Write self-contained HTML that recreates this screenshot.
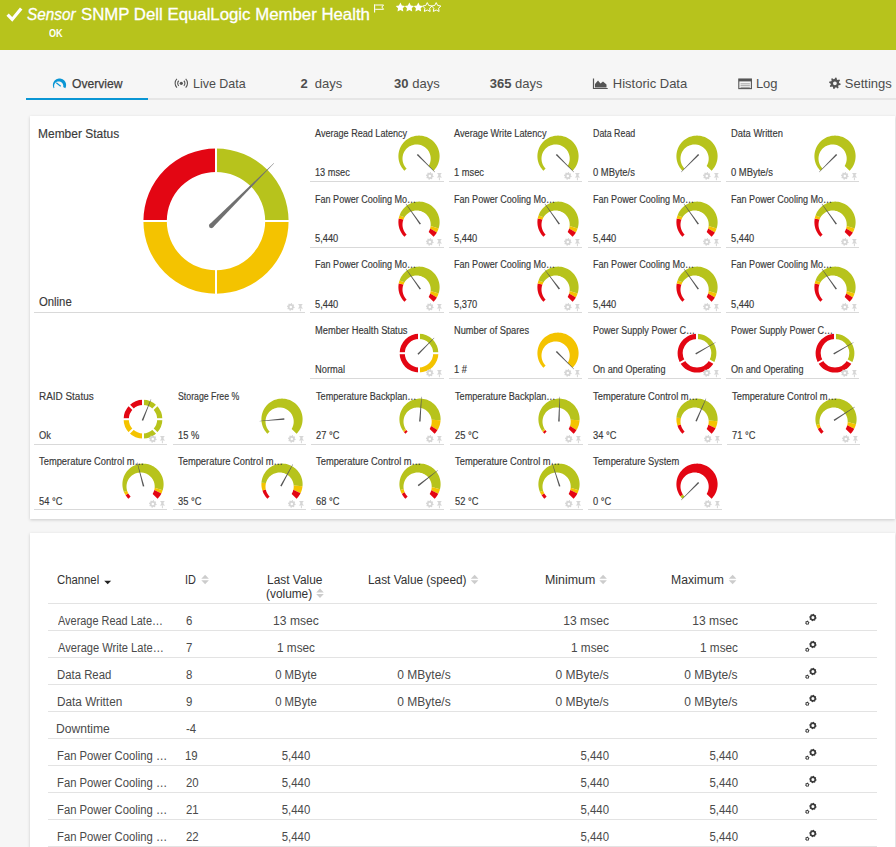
<!DOCTYPE html>
<html><head><meta charset="utf-8"><title>PRTG Sensor</title>
<style>
html,body{margin:0;padding:0}
body{width:896px;height:847px;overflow:hidden;position:relative;background:#f6f6f6;font-family:"Liberation Sans",sans-serif}
.t{position:absolute;white-space:nowrap}
svg{overflow:visible}
</style></head><body>
<div style="position:absolute;left:0;top:0;width:896px;height:50px;background:#b7c31c"></div><svg style="position:absolute;left:0;top:0" width="60" height="50"><path d="M7.6,14.6 L12.2,19.4 L21.2,8.6" fill="none" stroke="#fff" stroke-width="3.2" stroke-linecap="butt" stroke-linejoin="miter"/></svg><div class="t hd1" style="left:27.14px;top:6.94px;font-size:15.9px;line-height:15.9px;color:#fff;font-style:italic;-webkit-text-stroke:0.3px #fff;transform:scaleX(0.9640);transform-origin:0 0;">Sensor</div><div class="t hd2" style="left:80.64px;top:6.94px;font-size:15.9px;line-height:15.9px;color:#fff;-webkit-text-stroke:0.3px #fff;transform:scaleX(1.0563);transform-origin:0 0;">SNMP Dell EqualLogic Member Health</div><div class="t hok" style="left:48.9px;top:29.37px;font-size:10.2px;line-height:10.2px;color:#fff;font-weight:bold;transform:scaleX(0.8933);transform-origin:0 0;">OK</div><svg style="position:absolute;left:0;top:0" width="896" height="50"><path d="M374.6,4.3 L374.6,12.6" stroke="#fff" stroke-width="1.1"/><path d="M375.2,5 L383.6,5 L381.8,7 L383.6,9.3 L375.2,9.3" fill="none" stroke="#fff" stroke-width="1"/><path d="M400.4,2.6 L401.87,5.48 L405.06,5.99 L402.78,8.27 L403.28,11.46 L400.4,10 L397.52,11.46 L398.02,8.27 L395.74,5.99 L398.93,5.48Z" fill="#fff"/><path d="M409.35,2.6 L410.82,5.48 L414.01,5.99 L411.73,8.27 L412.23,11.46 L409.35,10 L406.47,11.46 L406.97,8.27 L404.69,5.99 L407.88,5.48Z" fill="#fff"/><path d="M418.3,2.6 L419.77,5.48 L422.96,5.99 L420.68,8.27 L421.18,11.46 L418.3,10 L415.42,11.46 L415.92,8.27 L413.64,5.99 L416.83,5.48Z" fill="#fff"/><path d="M427.25,2.6 L428.72,5.48 L431.91,5.99 L429.63,8.27 L430.13,11.46 L427.25,10 L424.37,11.46 L424.87,8.27 L422.59,5.99 L425.78,5.48Z" fill="none" stroke="#fff" stroke-width="1"/><path d="M436.2,2.6 L437.67,5.48 L440.86,5.99 L438.58,8.27 L439.08,11.46 L436.2,10 L433.32,11.46 L433.82,8.27 L431.54,5.99 L434.73,5.48Z" fill="none" stroke="#fff" stroke-width="1"/></svg>
<div style="position:absolute;left:26px;top:98px;width:870px;height:2px;background:#e6e6e6"></div><div style="position:absolute;left:26px;top:98px;width:122px;height:2px;background:#0a96d4"></div><div class="t tab1" style="left:71.9px;top:77.1px;font-size:13px;line-height:13px;color:#3d3d3d;-webkit-text-stroke:0.25px #3d3d3d;transform:scaleX(0.9309);transform-origin:0 0;">Overview</div><div class="t tab" style="left:192.64px;top:77px;font-size:13px;line-height:13px;color:#4d4d4d;transform:scaleX(0.9593);transform-origin:0 0;">Live Data</div><div class="t tab" style="left:300.4px;top:77px;font-size:13px;line-height:13px;color:#4d4d4d;"><b>2</b>&nbsp;&nbsp;days</div><div class="t tab" style="left:394.1px;top:77px;font-size:13px;line-height:13px;color:#4d4d4d;"><b>30</b> days</div><div class="t tab" style="left:489.8px;top:77px;font-size:13px;line-height:13px;color:#4d4d4d;"><b>365</b> days</div><div class="t tab" style="left:612.8px;top:77px;font-size:13px;line-height:13px;color:#4d4d4d;">Historic Data</div><div class="t tab" style="left:755.9px;top:77px;font-size:13px;line-height:13px;color:#4d4d4d;">Log</div><div class="t tab" style="left:844.8px;top:77px;font-size:13px;line-height:13px;color:#4d4d4d;">Settings</div><svg style="position:absolute;left:0;top:0" width="896" height="110"><path d="M53.67,88.2 L53.47,87.79 L53.3,87.37 L53.16,86.94 L53.05,86.5 L52.97,86.06 L52.92,85.61 L52.9,85.15 L52.91,84.7 L52.95,84.25 L53.03,83.8 L53.13,83.36 L53.27,82.93 L53.43,82.51 L53.62,82.1 L53.84,81.7 L54.09,81.32 L54.36,80.96 L54.66,80.62 L54.98,80.29 L55.32,80 L55.68,79.72 L56.05,79.47 L56.45,79.25 L56.86,79.05 L57.28,78.89 L57.71,78.75 L58.15,78.64 L58.6,78.56 L59.05,78.52 L59.5,78.5 L59.95,78.52 L60.4,78.56 L60.85,78.64 L61.29,78.75 L61.72,78.89 L62.14,79.05 L62.55,79.25 L62.95,79.47 L63.32,79.72 L63.68,80 L64.02,80.29 L64.34,80.62 L64.64,80.96 L64.91,81.32 L65.16,81.7 L65.38,82.1 L65.57,82.51 L65.73,82.93 L65.87,83.36 L65.97,83.8 L66.05,84.25 L66.09,84.7 L66.1,85.15 L66.08,85.61 L66.03,86.06 L65.95,86.5 L65.84,86.94 L65.7,87.37 L65.53,87.79 L65.33,88.2 L63.18,87.06 L63.24,86.77 L63.27,86.48 L63.3,86.2 L63.3,85.93 L63.29,85.65 L63.26,85.39 L63.22,85.13 L63.16,84.88 L63.09,84.63 L63.01,84.4 L62.92,84.17 L62.82,83.95 L62.7,83.73 L62.58,83.53 L62.45,83.33 L62.3,83.14 L62.15,82.96 L61.99,82.79 L61.83,82.63 L61.65,82.47 L61.47,82.33 L61.28,82.19 L61.08,82.06 L60.88,81.95 L60.66,81.84 L60.45,81.74 L60.22,81.66 L59.99,81.58 L59.75,81.52 L59.5,81.47 L59.25,81.43 L58.99,81.41 L58.73,81.4 L58.46,81.41 L58.19,81.43 L57.91,81.47 L57.64,81.52 L57.36,81.6 L57.08,81.69 L56.8,81.81 L56.53,81.94 L56.26,82.1 L56,82.28 L55.74,82.48 L55.5,82.7 L55.27,82.94 L55.05,83.2 L54.85,83.48 L54.67,83.78 L54.51,84.1 L54.37,84.43 L54.26,84.78 L54.18,85.14 L54.13,85.51 L54.1,85.89 L54.11,86.27 L54.15,86.66 L54.22,87.04 L54.32,87.41 L54.46,87.78Z" fill="#0a96d4"/><line x1="56.3" y1="82.7" x2="60.7" y2="86.3" stroke="#0a96d4" stroke-width="1.1"/><circle cx="181.3" cy="83.3" r="1.6" fill="#555"/><path d="M183.85,80.75 A3.6,3.6 0 0 1 183.85,85.85" fill="none" stroke="#555" stroke-width="1.1"/><path d="M178.75,85.85 A3.6,3.6 0 0 1 178.75,80.75" fill="none" stroke="#555" stroke-width="1.1"/><path d="M185.68,78.92 A6.2,6.2 0 0 1 185.68,87.68" fill="none" stroke="#555" stroke-width="1.1"/><path d="M176.92,87.68 A6.2,6.2 0 0 1 176.92,78.92" fill="none" stroke="#555" stroke-width="1.1"/><path d="M593.5,78.5 L593.5,88.5 L607.7,88.5" fill="none" stroke="#555" stroke-width="1.2"/><path d="M595,87.6 L595,84 L598,80.5 L600.5,83.5 L603,81.5 L606.5,84.5 L606.5,87.6Z" fill="#555"/><rect x="738.8" y="79" width="12.6" height="9.6" fill="none" stroke="#555" stroke-width="1.1"/><rect x="738.8" y="79" width="12.6" height="2.4" fill="#555"/><rect x="740.5" y="83.4" width="9.4" height="0.9" fill="#999"/><rect x="740.5" y="85.3" width="9.4" height="0.9" fill="#999"/><rect x="740.5" y="87.1" width="9.4" height="0.9" fill="#999"/><path d="M835.47,77.53 L836.58,77.75 L836.88,79.6 L837.56,80.05 L839.38,79.62 L840.02,80.57 L838.92,82.08 L839.08,82.89 L840.67,83.87 L840.45,84.98 L838.6,85.28 L838.15,85.96 L838.58,87.78 L837.63,88.42 L836.12,87.32 L835.31,87.48 L834.33,89.07 L833.22,88.85 L832.92,87 L832.24,86.55 L830.42,86.98 L829.78,86.03 L830.88,84.52 L830.72,83.71 L829.13,82.73 L829.35,81.62 L831.2,81.32 L831.65,80.64 L831.22,78.82 L832.17,78.18 L833.68,79.28 L834.49,79.12Z M836.8,83.3 A1.9,1.9 0 1 0 833,83.3 A1.9,1.9 0 1 0 836.8,83.3Z" fill="#555" fill-rule="evenodd"/></svg>
<div style="position:absolute;left:30px;top:116px;width:865px;height:403px;background:#fff;box-shadow:0 1px 3px rgba(0,0,0,0.18)"></div><div style="position:absolute;left:30px;top:533px;width:865px;height:330px;background:#fff;box-shadow:0 1px 3px rgba(0,0,0,0.18)"></div>
<svg style="position:absolute;left:0;top:0" width="896" height="847"><rect x="310" y="181" width="134" height="1" fill="#d9d9d9"/><path d="M404.43,170.77 L403.46,169.72 L402.56,168.61 L401.74,167.45 L401,166.22 L400.35,164.95 L399.79,163.64 L399.32,162.29 L398.95,160.92 L398.67,159.52 L398.49,158.1 L398.41,156.68 L398.42,155.25 L398.54,153.83 L398.75,152.41 L399.06,151.02 L399.47,149.65 L399.97,148.32 L400.56,147.02 L401.24,145.76 L402.01,144.56 L402.85,143.41 L403.78,142.32 L404.77,141.3 L405.84,140.35 L406.97,139.48 L408.16,138.69 L409.39,137.98 L410.68,137.36 L412,136.82 L413.36,136.39 L414.75,136.04 L416.15,135.8 L417.57,135.65 L419,135.6 L420.43,135.65 L421.85,135.8 L423.25,136.04 L424.64,136.39 L426,136.82 L427.32,137.36 L428.61,137.98 L429.84,138.69 L431.03,139.48 L432.16,140.35 L433.23,141.3 L434.22,142.32 L435.15,143.41 L435.99,144.56 L436.76,145.76 L437.44,147.02 L438.03,148.32 L438.53,149.65 L438.94,151.02 L439.25,152.41 L439.46,153.83 L439.58,155.25 L439.59,156.68 L439.51,158.1 L439.33,159.52 L439.05,160.92 L438.68,162.29 L438.21,163.64 L437.65,164.95 L437,166.22 L436.26,167.45 L435.44,168.61 L434.54,169.72 L433.57,170.77 L428.68,165.88 L429.15,165.03 L429.55,164.17 L429.89,163.3 L430.17,162.42 L430.39,161.55 L430.55,160.67 L430.65,159.81 L430.7,158.95 L430.69,158.11 L430.64,157.28 L430.54,156.47 L430.39,155.67 L430.21,154.9 L429.98,154.15 L429.71,153.42 L429.41,152.71 L429.07,152.03 L428.7,151.37 L428.3,150.73 L427.87,150.12 L427.41,149.54 L426.91,148.99 L426.39,148.46 L425.85,147.96 L425.27,147.48 L424.67,147.04 L424.05,146.63 L423.4,146.25 L422.72,145.9 L422.02,145.58 L421.3,145.31 L420.55,145.07 L419.79,144.86 L419,144.71 L418.19,144.59 L417.37,144.52 L416.53,144.5 L415.68,144.53 L414.82,144.61 L413.95,144.75 L413.07,144.95 L412.19,145.21 L411.32,145.53 L410.45,145.91 L409.6,146.36 L408.77,146.87 L407.96,147.46 L407.18,148.11 L406.44,148.82 L405.75,149.6 L405.1,150.44 L404.51,151.34 L403.99,152.3 L403.53,153.31 L403.15,154.36 L402.86,155.45 L402.65,156.58 L402.53,157.73 L402.5,158.89 L402.58,160.06 L402.75,161.23 L403.02,162.39 L403.39,163.53 L403.86,164.63 L404.42,165.7 L405.07,166.72 L405.81,167.68 L406.63,168.57Z" fill="#b7c31c"/><path d="M416.84,155.1 L434.79,172.23 L435.03,171.99 L417.9,154.04Z" fill="#555"/><path d="M430.18,172.02 L430.93,172.17 L431.21,173.25 L431.7,173.58 L432.81,173.43 L433.24,174.06 L432.67,175.03 L432.79,175.61 L433.68,176.28 L433.53,177.03 L432.45,177.31 L432.12,177.8 L432.27,178.91 L431.64,179.34 L430.67,178.77 L430.09,178.89 L429.42,179.78 L428.67,179.63 L428.39,178.55 L427.9,178.22 L426.79,178.37 L426.36,177.74 L426.93,176.77 L426.81,176.19 L425.92,175.52 L426.07,174.77 L427.15,174.49 L427.48,174 L427.33,172.89 L427.96,172.46 L428.93,173.03 L429.51,172.91Z M431.05,175.9 A1.25,1.25 0 1 0 428.55,175.9 A1.25,1.25 0 1 0 431.05,175.9Z" fill="#d6d6d6" fill-rule="evenodd"/><path d="M437.4,173 L441.4,173 L441.4,173.9 L440.6,174.3 L440.6,176.1 L442.1,177.6 L436.7,177.6 L438.2,176.1 L438.2,174.3 L437.4,173.9Z" fill="#d6d6d6"/><rect x="438.9" y="177.6" width="1" height="2.6" fill="#d6d6d6"/><rect x="449" y="181" width="133" height="1" fill="#d9d9d9"/><path d="M543.43,170.77 L542.46,169.72 L541.56,168.61 L540.74,167.45 L540,166.22 L539.35,164.95 L538.79,163.64 L538.32,162.29 L537.95,160.92 L537.67,159.52 L537.49,158.1 L537.41,156.68 L537.42,155.25 L537.54,153.83 L537.75,152.41 L538.06,151.02 L538.47,149.65 L538.97,148.32 L539.56,147.02 L540.24,145.76 L541.01,144.56 L541.85,143.41 L542.78,142.32 L543.77,141.3 L544.84,140.35 L545.97,139.48 L547.16,138.69 L548.39,137.98 L549.68,137.36 L551,136.82 L552.36,136.39 L553.75,136.04 L555.15,135.8 L556.57,135.65 L558,135.6 L559.43,135.65 L560.85,135.8 L562.25,136.04 L563.64,136.39 L565,136.82 L566.32,137.36 L567.61,137.98 L568.84,138.69 L570.03,139.48 L571.16,140.35 L572.23,141.3 L573.22,142.32 L574.15,143.41 L574.99,144.56 L575.76,145.76 L576.44,147.02 L577.03,148.32 L577.53,149.65 L577.94,151.02 L578.25,152.41 L578.46,153.83 L578.58,155.25 L578.59,156.68 L578.51,158.1 L578.33,159.52 L578.05,160.92 L577.68,162.29 L577.21,163.64 L576.65,164.95 L576,166.22 L575.26,167.45 L574.44,168.61 L573.54,169.72 L572.57,170.77 L567.68,165.88 L568.15,165.03 L568.55,164.17 L568.89,163.3 L569.17,162.42 L569.39,161.55 L569.55,160.67 L569.65,159.81 L569.7,158.95 L569.69,158.11 L569.64,157.28 L569.54,156.47 L569.39,155.67 L569.21,154.9 L568.98,154.15 L568.71,153.42 L568.41,152.71 L568.07,152.03 L567.7,151.37 L567.3,150.73 L566.87,150.12 L566.41,149.54 L565.91,148.99 L565.39,148.46 L564.85,147.96 L564.27,147.48 L563.67,147.04 L563.05,146.63 L562.4,146.25 L561.72,145.9 L561.02,145.58 L560.3,145.31 L559.55,145.07 L558.79,144.86 L558,144.71 L557.19,144.59 L556.37,144.52 L555.53,144.5 L554.68,144.53 L553.82,144.61 L552.95,144.75 L552.07,144.95 L551.19,145.21 L550.32,145.53 L549.45,145.91 L548.6,146.36 L547.77,146.87 L546.96,147.46 L546.18,148.11 L545.44,148.82 L544.75,149.6 L544.1,150.44 L543.51,151.34 L542.99,152.3 L542.53,153.31 L542.15,154.36 L541.86,155.45 L541.65,156.58 L541.53,157.73 L541.5,158.89 L541.58,160.06 L541.75,161.23 L542.02,162.39 L542.39,163.53 L542.86,164.63 L543.42,165.7 L544.07,166.72 L544.81,167.68 L545.63,168.57Z" fill="#b7c31c"/><path d="M555.84,155.1 L573.79,172.23 L574.03,171.99 L556.9,154.04Z" fill="#555"/><path d="M568.18,172.02 L568.93,172.17 L569.21,173.25 L569.7,173.58 L570.81,173.43 L571.24,174.06 L570.67,175.03 L570.79,175.61 L571.68,176.28 L571.53,177.03 L570.45,177.31 L570.12,177.8 L570.27,178.91 L569.64,179.34 L568.67,178.77 L568.09,178.89 L567.42,179.78 L566.67,179.63 L566.39,178.55 L565.9,178.22 L564.79,178.37 L564.36,177.74 L564.93,176.77 L564.81,176.19 L563.92,175.52 L564.07,174.77 L565.15,174.49 L565.48,174 L565.33,172.89 L565.96,172.46 L566.93,173.03 L567.51,172.91Z M569.05,175.9 A1.25,1.25 0 1 0 566.55,175.9 A1.25,1.25 0 1 0 569.05,175.9Z" fill="#d6d6d6" fill-rule="evenodd"/><path d="M575.4,173 L579.4,173 L579.4,173.9 L578.6,174.3 L578.6,176.1 L580.1,177.6 L574.7,177.6 L576.2,176.1 L576.2,174.3 L575.4,173.9Z" fill="#d6d6d6"/><rect x="576.9" y="177.6" width="1" height="2.6" fill="#d6d6d6"/><rect x="588" y="181" width="133" height="1" fill="#d9d9d9"/><path d="M682.43,170.77 L681.46,169.72 L680.56,168.61 L679.74,167.45 L679,166.22 L678.35,164.95 L677.79,163.64 L677.32,162.29 L676.95,160.92 L676.67,159.52 L676.49,158.1 L676.41,156.68 L676.42,155.25 L676.54,153.83 L676.75,152.41 L677.06,151.02 L677.47,149.65 L677.97,148.32 L678.56,147.02 L679.24,145.76 L680.01,144.56 L680.85,143.41 L681.78,142.32 L682.77,141.3 L683.84,140.35 L684.97,139.48 L686.16,138.69 L687.39,137.98 L688.68,137.36 L690,136.82 L691.36,136.39 L692.75,136.04 L694.15,135.8 L695.57,135.65 L697,135.6 L698.43,135.65 L699.85,135.8 L701.25,136.04 L702.64,136.39 L704,136.82 L705.32,137.36 L706.61,137.98 L707.84,138.69 L709.03,139.48 L710.16,140.35 L711.23,141.3 L712.22,142.32 L713.15,143.41 L713.99,144.56 L714.76,145.76 L715.44,147.02 L716.03,148.32 L716.53,149.65 L716.94,151.02 L717.25,152.41 L717.46,153.83 L717.58,155.25 L717.59,156.68 L717.51,158.1 L717.33,159.52 L717.05,160.92 L716.68,162.29 L716.21,163.64 L715.65,164.95 L715,166.22 L714.26,167.45 L713.44,168.61 L712.54,169.72 L711.57,170.77 L706.68,165.88 L707.15,165.03 L707.55,164.17 L707.89,163.3 L708.17,162.42 L708.39,161.55 L708.55,160.67 L708.65,159.81 L708.7,158.95 L708.69,158.11 L708.64,157.28 L708.54,156.47 L708.39,155.67 L708.21,154.9 L707.98,154.15 L707.71,153.42 L707.41,152.71 L707.07,152.03 L706.7,151.37 L706.3,150.73 L705.87,150.12 L705.41,149.54 L704.91,148.99 L704.39,148.46 L703.85,147.96 L703.27,147.48 L702.67,147.04 L702.05,146.63 L701.4,146.25 L700.72,145.9 L700.02,145.58 L699.3,145.31 L698.55,145.07 L697.79,144.86 L697,144.71 L696.19,144.59 L695.37,144.52 L694.53,144.5 L693.68,144.53 L692.82,144.61 L691.95,144.75 L691.07,144.95 L690.19,145.21 L689.32,145.53 L688.45,145.91 L687.6,146.36 L686.77,146.87 L685.96,147.46 L685.18,148.11 L684.44,148.82 L683.75,149.6 L683.1,150.44 L682.51,151.34 L681.99,152.3 L681.53,153.31 L681.15,154.36 L680.86,155.45 L680.65,156.58 L680.53,157.73 L680.5,158.89 L680.58,160.06 L680.75,161.23 L681.02,162.39 L681.39,163.53 L681.86,164.63 L682.42,165.7 L683.07,166.72 L683.81,167.68 L684.63,168.57Z" fill="#b7c31c"/><path d="M698.1,154.04 L680.97,171.99 L681.21,172.23 L699.16,155.1Z" fill="#555"/><path d="M707.18,172.02 L707.93,172.17 L708.21,173.25 L708.7,173.58 L709.81,173.43 L710.24,174.06 L709.67,175.03 L709.79,175.61 L710.68,176.28 L710.53,177.03 L709.45,177.31 L709.12,177.8 L709.27,178.91 L708.64,179.34 L707.67,178.77 L707.09,178.89 L706.42,179.78 L705.67,179.63 L705.39,178.55 L704.9,178.22 L703.79,178.37 L703.36,177.74 L703.93,176.77 L703.81,176.19 L702.92,175.52 L703.07,174.77 L704.15,174.49 L704.48,174 L704.33,172.89 L704.96,172.46 L705.93,173.03 L706.51,172.91Z M708.05,175.9 A1.25,1.25 0 1 0 705.55,175.9 A1.25,1.25 0 1 0 708.05,175.9Z" fill="#d6d6d6" fill-rule="evenodd"/><path d="M714.4,173 L718.4,173 L718.4,173.9 L717.6,174.3 L717.6,176.1 L719.1,177.6 L713.7,177.6 L715.2,176.1 L715.2,174.3 L714.4,173.9Z" fill="#d6d6d6"/><rect x="715.9" y="177.6" width="1" height="2.6" fill="#d6d6d6"/><rect x="726" y="181" width="133" height="1" fill="#d9d9d9"/><path d="M820.43,170.77 L819.46,169.72 L818.56,168.61 L817.74,167.45 L817,166.22 L816.35,164.95 L815.79,163.64 L815.32,162.29 L814.95,160.92 L814.67,159.52 L814.49,158.1 L814.41,156.68 L814.42,155.25 L814.54,153.83 L814.75,152.41 L815.06,151.02 L815.47,149.65 L815.97,148.32 L816.56,147.02 L817.24,145.76 L818.01,144.56 L818.85,143.41 L819.78,142.32 L820.77,141.3 L821.84,140.35 L822.97,139.48 L824.16,138.69 L825.39,137.98 L826.68,137.36 L828,136.82 L829.36,136.39 L830.75,136.04 L832.15,135.8 L833.57,135.65 L835,135.6 L836.43,135.65 L837.85,135.8 L839.25,136.04 L840.64,136.39 L842,136.82 L843.32,137.36 L844.61,137.98 L845.84,138.69 L847.03,139.48 L848.16,140.35 L849.23,141.3 L850.22,142.32 L851.15,143.41 L851.99,144.56 L852.76,145.76 L853.44,147.02 L854.03,148.32 L854.53,149.65 L854.94,151.02 L855.25,152.41 L855.46,153.83 L855.58,155.25 L855.59,156.68 L855.51,158.1 L855.33,159.52 L855.05,160.92 L854.68,162.29 L854.21,163.64 L853.65,164.95 L853,166.22 L852.26,167.45 L851.44,168.61 L850.54,169.72 L849.57,170.77 L844.68,165.88 L845.15,165.03 L845.55,164.17 L845.89,163.3 L846.17,162.42 L846.39,161.55 L846.55,160.67 L846.65,159.81 L846.7,158.95 L846.69,158.11 L846.64,157.28 L846.54,156.47 L846.39,155.67 L846.21,154.9 L845.98,154.15 L845.71,153.42 L845.41,152.71 L845.07,152.03 L844.7,151.37 L844.3,150.73 L843.87,150.12 L843.41,149.54 L842.91,148.99 L842.39,148.46 L841.85,147.96 L841.27,147.48 L840.67,147.04 L840.05,146.63 L839.4,146.25 L838.72,145.9 L838.02,145.58 L837.3,145.31 L836.55,145.07 L835.79,144.86 L835,144.71 L834.19,144.59 L833.37,144.52 L832.53,144.5 L831.68,144.53 L830.82,144.61 L829.95,144.75 L829.07,144.95 L828.19,145.21 L827.32,145.53 L826.45,145.91 L825.6,146.36 L824.77,146.87 L823.96,147.46 L823.18,148.11 L822.44,148.82 L821.75,149.6 L821.1,150.44 L820.51,151.34 L819.99,152.3 L819.53,153.31 L819.15,154.36 L818.86,155.45 L818.65,156.58 L818.53,157.73 L818.5,158.89 L818.58,160.06 L818.75,161.23 L819.02,162.39 L819.39,163.53 L819.86,164.63 L820.42,165.7 L821.07,166.72 L821.81,167.68 L822.63,168.57Z" fill="#b7c31c"/><path d="M836.1,154.04 L818.97,171.99 L819.21,172.23 L837.16,155.1Z" fill="#555"/><path d="M845.18,172.02 L845.93,172.17 L846.21,173.25 L846.7,173.58 L847.81,173.43 L848.24,174.06 L847.67,175.03 L847.79,175.61 L848.68,176.28 L848.53,177.03 L847.45,177.31 L847.12,177.8 L847.27,178.91 L846.64,179.34 L845.67,178.77 L845.09,178.89 L844.42,179.78 L843.67,179.63 L843.39,178.55 L842.9,178.22 L841.79,178.37 L841.36,177.74 L841.93,176.77 L841.81,176.19 L840.92,175.52 L841.07,174.77 L842.15,174.49 L842.48,174 L842.33,172.89 L842.96,172.46 L843.93,173.03 L844.51,172.91Z M846.05,175.9 A1.25,1.25 0 1 0 843.55,175.9 A1.25,1.25 0 1 0 846.05,175.9Z" fill="#d6d6d6" fill-rule="evenodd"/><path d="M852.4,173 L856.4,173 L856.4,173.9 L855.6,174.3 L855.6,176.1 L857.1,177.6 L851.7,177.6 L853.2,176.1 L853.2,174.3 L852.4,173.9Z" fill="#d6d6d6"/><rect x="853.9" y="177.6" width="1" height="2.6" fill="#d6d6d6"/><rect x="310" y="247" width="134" height="1" fill="#d9d9d9"/><path d="M404.43,236.77 L403.47,235.73 L402.58,234.64 L401.77,233.48 L401.03,232.28 L400.38,231.02 L399.82,229.73 L399.35,228.39 L398.98,227.03 L398.69,225.65 L398.5,224.25 L398.41,222.84 L398.41,221.43 L398.52,220.02 L398.71,218.62 L403.47,219.46 L403.11,220.51 L402.82,221.59 L402.63,222.71 L402.52,223.85 L402.51,225 L402.59,226.16 L402.76,227.32 L403.04,228.46 L403.41,229.59 L403.88,230.68 L404.44,231.73 L405.09,232.74 L405.82,233.69 L406.63,234.57Z" fill="#e30613"/><path d="M398.71,218.62 L398.93,217.57 L399.2,216.52 L399.52,215.49 L404.58,217.23 L404.17,217.95 L403.8,218.69 L403.47,219.46Z" fill="#f4c300"/><path d="M399.52,215.49 L400.03,214.16 L400.64,212.86 L401.33,211.61 L402.11,210.41 L402.97,209.27 L403.9,208.19 L404.91,207.17 L405.99,206.23 L407.13,205.37 L408.32,204.58 L409.57,203.89 L410.86,203.28 L412.2,202.76 L413.56,202.33 L414.95,202 L416.36,201.77 L417.79,201.64 L419.22,201.6 L420.64,201.67 L422.06,201.83 L423.47,202.09 L424.85,202.45 L426.21,202.9 L427.53,203.45 L428.81,204.09 L430.04,204.81 L431.22,205.62 L432.35,206.51 L433.4,207.47 L434.39,208.51 L435.3,209.61 L436.14,210.77 L436.89,211.98 L437.55,213.25 L438.13,214.56 L438.61,215.9 L439,217.28 L439.3,218.68 L439.49,220.09 L439.59,221.52 L439.59,222.95 L439.48,224.38 L439.28,225.79 L438.99,227.19 L438.59,228.57 L430.63,225.98 L430.69,225.12 L430.7,224.27 L430.65,223.44 L430.56,222.62 L430.42,221.82 L430.24,221.04 L430.02,220.29 L429.77,219.55 L429.47,218.84 L429.14,218.15 L428.77,217.48 L428.38,216.84 L427.95,216.23 L427.49,215.64 L427,215.08 L426.48,214.55 L425.94,214.04 L425.37,213.56 L424.77,213.11 L424.15,212.69 L423.5,212.31 L422.83,211.95 L422.13,211.63 L421.41,211.35 L420.67,211.1 L419.91,210.89 L419.12,210.73 L418.32,210.6 L417.49,210.53 L416.66,210.5 L415.8,210.52 L414.94,210.6 L414.07,210.73 L413.19,210.92 L412.31,211.17 L411.44,211.48 L410.57,211.85 L409.71,212.3 L408.88,212.8 L408.06,213.38 L407.28,214.02 L406.53,214.73 L405.83,215.5 L405.17,216.34 L404.58,217.23Z" fill="#b7c31c"/><path d="M438.59,228.57 L438.23,229.58 L437.82,230.58 L437.35,231.55 L436.84,232.5 L430.12,228.62 L430.3,227.96 L430.44,227.29 L430.55,226.63 L430.63,225.98Z" fill="#f4c300"/><path d="M436.84,232.5 L436.13,233.64 L435.34,234.74 L434.49,235.78 L433.57,236.77 L428.68,231.88 L429.12,231.08 L429.51,230.27 L429.84,229.44 L430.12,228.62Z" fill="#e30613"/><path d="M420.95,223.63 L406.04,203.8 L405.76,204.01 L419.73,224.51Z" fill="#555"/><path d="M430.18,238.02 L430.93,238.17 L431.21,239.25 L431.7,239.58 L432.81,239.43 L433.24,240.06 L432.67,241.03 L432.79,241.61 L433.68,242.28 L433.53,243.03 L432.45,243.31 L432.12,243.8 L432.27,244.91 L431.64,245.34 L430.67,244.77 L430.09,244.89 L429.42,245.78 L428.67,245.63 L428.39,244.55 L427.9,244.22 L426.79,244.37 L426.36,243.74 L426.93,242.77 L426.81,242.19 L425.92,241.52 L426.07,240.77 L427.15,240.49 L427.48,240 L427.33,238.89 L427.96,238.46 L428.93,239.03 L429.51,238.91Z M431.05,241.9 A1.25,1.25 0 1 0 428.55,241.9 A1.25,1.25 0 1 0 431.05,241.9Z" fill="#d6d6d6" fill-rule="evenodd"/><path d="M437.4,239 L441.4,239 L441.4,239.9 L440.6,240.3 L440.6,242.1 L442.1,243.6 L436.7,243.6 L438.2,242.1 L438.2,240.3 L437.4,239.9Z" fill="#d6d6d6"/><rect x="438.9" y="243.6" width="1" height="2.6" fill="#d6d6d6"/><rect x="449" y="247" width="133" height="1" fill="#d9d9d9"/><path d="M543.43,236.77 L542.47,235.73 L541.58,234.64 L540.77,233.48 L540.03,232.28 L539.38,231.02 L538.82,229.73 L538.35,228.39 L537.98,227.03 L537.69,225.65 L537.5,224.25 L537.41,222.84 L537.41,221.43 L537.52,220.02 L537.71,218.62 L542.47,219.46 L542.11,220.51 L541.82,221.59 L541.63,222.71 L541.52,223.85 L541.51,225 L541.59,226.16 L541.76,227.32 L542.04,228.46 L542.41,229.59 L542.88,230.68 L543.44,231.73 L544.09,232.74 L544.82,233.69 L545.63,234.57Z" fill="#e30613"/><path d="M537.71,218.62 L537.93,217.57 L538.2,216.52 L538.52,215.49 L543.58,217.23 L543.17,217.95 L542.8,218.69 L542.47,219.46Z" fill="#f4c300"/><path d="M538.52,215.49 L539.03,214.16 L539.64,212.86 L540.33,211.61 L541.11,210.41 L541.97,209.27 L542.9,208.19 L543.91,207.17 L544.99,206.23 L546.13,205.37 L547.32,204.58 L548.57,203.89 L549.86,203.28 L551.2,202.76 L552.56,202.33 L553.95,202 L555.36,201.77 L556.79,201.64 L558.22,201.6 L559.64,201.67 L561.06,201.83 L562.47,202.09 L563.85,202.45 L565.21,202.9 L566.53,203.45 L567.81,204.09 L569.04,204.81 L570.22,205.62 L571.35,206.51 L572.4,207.47 L573.39,208.51 L574.3,209.61 L575.14,210.77 L575.89,211.98 L576.55,213.25 L577.13,214.56 L577.61,215.9 L578,217.28 L578.3,218.68 L578.49,220.09 L578.59,221.52 L578.59,222.95 L578.48,224.38 L578.28,225.79 L577.99,227.19 L577.59,228.57 L569.63,225.98 L569.69,225.12 L569.7,224.27 L569.65,223.44 L569.56,222.62 L569.42,221.82 L569.24,221.04 L569.02,220.29 L568.77,219.55 L568.47,218.84 L568.14,218.15 L567.77,217.48 L567.38,216.84 L566.95,216.23 L566.49,215.64 L566,215.08 L565.48,214.55 L564.94,214.04 L564.37,213.56 L563.77,213.11 L563.15,212.69 L562.5,212.31 L561.83,211.95 L561.13,211.63 L560.41,211.35 L559.67,211.1 L558.91,210.89 L558.12,210.73 L557.32,210.6 L556.49,210.53 L555.66,210.5 L554.8,210.52 L553.94,210.6 L553.07,210.73 L552.19,210.92 L551.31,211.17 L550.44,211.48 L549.57,211.85 L548.71,212.3 L547.88,212.8 L547.06,213.38 L546.28,214.02 L545.53,214.73 L544.83,215.5 L544.17,216.34 L543.58,217.23Z" fill="#b7c31c"/><path d="M577.59,228.57 L577.23,229.58 L576.82,230.58 L576.35,231.55 L575.84,232.5 L569.12,228.62 L569.3,227.96 L569.44,227.29 L569.55,226.63 L569.63,225.98Z" fill="#f4c300"/><path d="M575.84,232.5 L575.13,233.64 L574.34,234.74 L573.49,235.78 L572.57,236.77 L567.68,231.88 L568.12,231.08 L568.51,230.27 L568.84,229.44 L569.12,228.62Z" fill="#e30613"/><path d="M559.95,223.63 L545.04,203.8 L544.76,204.01 L558.73,224.51Z" fill="#555"/><path d="M568.18,238.02 L568.93,238.17 L569.21,239.25 L569.7,239.58 L570.81,239.43 L571.24,240.06 L570.67,241.03 L570.79,241.61 L571.68,242.28 L571.53,243.03 L570.45,243.31 L570.12,243.8 L570.27,244.91 L569.64,245.34 L568.67,244.77 L568.09,244.89 L567.42,245.78 L566.67,245.63 L566.39,244.55 L565.9,244.22 L564.79,244.37 L564.36,243.74 L564.93,242.77 L564.81,242.19 L563.92,241.52 L564.07,240.77 L565.15,240.49 L565.48,240 L565.33,238.89 L565.96,238.46 L566.93,239.03 L567.51,238.91Z M569.05,241.9 A1.25,1.25 0 1 0 566.55,241.9 A1.25,1.25 0 1 0 569.05,241.9Z" fill="#d6d6d6" fill-rule="evenodd"/><path d="M575.4,239 L579.4,239 L579.4,239.9 L578.6,240.3 L578.6,242.1 L580.1,243.6 L574.7,243.6 L576.2,242.1 L576.2,240.3 L575.4,239.9Z" fill="#d6d6d6"/><rect x="576.9" y="243.6" width="1" height="2.6" fill="#d6d6d6"/><rect x="588" y="247" width="133" height="1" fill="#d9d9d9"/><path d="M682.43,236.77 L681.47,235.73 L680.58,234.64 L679.77,233.48 L679.03,232.28 L678.38,231.02 L677.82,229.73 L677.35,228.39 L676.98,227.03 L676.69,225.65 L676.5,224.25 L676.41,222.84 L676.41,221.43 L676.52,220.02 L676.71,218.62 L681.47,219.46 L681.11,220.51 L680.82,221.59 L680.63,222.71 L680.52,223.85 L680.51,225 L680.59,226.16 L680.76,227.32 L681.04,228.46 L681.41,229.59 L681.88,230.68 L682.44,231.73 L683.09,232.74 L683.82,233.69 L684.63,234.57Z" fill="#e30613"/><path d="M676.71,218.62 L676.93,217.57 L677.2,216.52 L677.52,215.49 L682.58,217.23 L682.17,217.95 L681.8,218.69 L681.47,219.46Z" fill="#f4c300"/><path d="M677.52,215.49 L678.03,214.16 L678.64,212.86 L679.33,211.61 L680.11,210.41 L680.97,209.27 L681.9,208.19 L682.91,207.17 L683.99,206.23 L685.13,205.37 L686.32,204.58 L687.57,203.89 L688.86,203.28 L690.2,202.76 L691.56,202.33 L692.95,202 L694.36,201.77 L695.79,201.64 L697.22,201.6 L698.64,201.67 L700.06,201.83 L701.47,202.09 L702.85,202.45 L704.21,202.9 L705.53,203.45 L706.81,204.09 L708.04,204.81 L709.22,205.62 L710.35,206.51 L711.4,207.47 L712.39,208.51 L713.3,209.61 L714.14,210.77 L714.89,211.98 L715.55,213.25 L716.13,214.56 L716.61,215.9 L717,217.28 L717.3,218.68 L717.49,220.09 L717.59,221.52 L717.59,222.95 L717.48,224.38 L717.28,225.79 L716.99,227.19 L716.59,228.57 L708.63,225.98 L708.69,225.12 L708.7,224.27 L708.65,223.44 L708.56,222.62 L708.42,221.82 L708.24,221.04 L708.02,220.29 L707.77,219.55 L707.47,218.84 L707.14,218.15 L706.77,217.48 L706.38,216.84 L705.95,216.23 L705.49,215.64 L705,215.08 L704.48,214.55 L703.94,214.04 L703.37,213.56 L702.77,213.11 L702.15,212.69 L701.5,212.31 L700.83,211.95 L700.13,211.63 L699.41,211.35 L698.67,211.1 L697.91,210.89 L697.12,210.73 L696.32,210.6 L695.49,210.53 L694.66,210.5 L693.8,210.52 L692.94,210.6 L692.07,210.73 L691.19,210.92 L690.31,211.17 L689.44,211.48 L688.57,211.85 L687.71,212.3 L686.88,212.8 L686.06,213.38 L685.28,214.02 L684.53,214.73 L683.83,215.5 L683.17,216.34 L682.58,217.23Z" fill="#b7c31c"/><path d="M716.59,228.57 L716.23,229.58 L715.82,230.58 L715.35,231.55 L714.84,232.5 L708.12,228.62 L708.3,227.96 L708.44,227.29 L708.55,226.63 L708.63,225.98Z" fill="#f4c300"/><path d="M714.84,232.5 L714.13,233.64 L713.34,234.74 L712.49,235.78 L711.57,236.77 L706.68,231.88 L707.12,231.08 L707.51,230.27 L707.84,229.44 L708.12,228.62Z" fill="#e30613"/><path d="M698.95,223.63 L684.04,203.8 L683.76,204.01 L697.73,224.51Z" fill="#555"/><path d="M707.18,238.02 L707.93,238.17 L708.21,239.25 L708.7,239.58 L709.81,239.43 L710.24,240.06 L709.67,241.03 L709.79,241.61 L710.68,242.28 L710.53,243.03 L709.45,243.31 L709.12,243.8 L709.27,244.91 L708.64,245.34 L707.67,244.77 L707.09,244.89 L706.42,245.78 L705.67,245.63 L705.39,244.55 L704.9,244.22 L703.79,244.37 L703.36,243.74 L703.93,242.77 L703.81,242.19 L702.92,241.52 L703.07,240.77 L704.15,240.49 L704.48,240 L704.33,238.89 L704.96,238.46 L705.93,239.03 L706.51,238.91Z M708.05,241.9 A1.25,1.25 0 1 0 705.55,241.9 A1.25,1.25 0 1 0 708.05,241.9Z" fill="#d6d6d6" fill-rule="evenodd"/><path d="M714.4,239 L718.4,239 L718.4,239.9 L717.6,240.3 L717.6,242.1 L719.1,243.6 L713.7,243.6 L715.2,242.1 L715.2,240.3 L714.4,239.9Z" fill="#d6d6d6"/><rect x="715.9" y="243.6" width="1" height="2.6" fill="#d6d6d6"/><rect x="726" y="247" width="133" height="1" fill="#d9d9d9"/><path d="M820.43,236.77 L819.47,235.73 L818.58,234.64 L817.77,233.48 L817.03,232.28 L816.38,231.02 L815.82,229.73 L815.35,228.39 L814.98,227.03 L814.69,225.65 L814.5,224.25 L814.41,222.84 L814.41,221.43 L814.52,220.02 L814.71,218.62 L819.47,219.46 L819.11,220.51 L818.82,221.59 L818.63,222.71 L818.52,223.85 L818.51,225 L818.59,226.16 L818.76,227.32 L819.04,228.46 L819.41,229.59 L819.88,230.68 L820.44,231.73 L821.09,232.74 L821.82,233.69 L822.63,234.57Z" fill="#e30613"/><path d="M814.71,218.62 L814.93,217.57 L815.2,216.52 L815.52,215.49 L820.58,217.23 L820.17,217.95 L819.8,218.69 L819.47,219.46Z" fill="#f4c300"/><path d="M815.52,215.49 L816.03,214.16 L816.64,212.86 L817.33,211.61 L818.11,210.41 L818.97,209.27 L819.9,208.19 L820.91,207.17 L821.99,206.23 L823.13,205.37 L824.32,204.58 L825.57,203.89 L826.86,203.28 L828.2,202.76 L829.56,202.33 L830.95,202 L832.36,201.77 L833.79,201.64 L835.22,201.6 L836.64,201.67 L838.06,201.83 L839.47,202.09 L840.85,202.45 L842.21,202.9 L843.53,203.45 L844.81,204.09 L846.04,204.81 L847.22,205.62 L848.35,206.51 L849.4,207.47 L850.39,208.51 L851.3,209.61 L852.14,210.77 L852.89,211.98 L853.55,213.25 L854.13,214.56 L854.61,215.9 L855,217.28 L855.3,218.68 L855.49,220.09 L855.59,221.52 L855.59,222.95 L855.48,224.38 L855.28,225.79 L854.99,227.19 L854.59,228.57 L846.63,225.98 L846.69,225.12 L846.7,224.27 L846.65,223.44 L846.56,222.62 L846.42,221.82 L846.24,221.04 L846.02,220.29 L845.77,219.55 L845.47,218.84 L845.14,218.15 L844.77,217.48 L844.38,216.84 L843.95,216.23 L843.49,215.64 L843,215.08 L842.48,214.55 L841.94,214.04 L841.37,213.56 L840.77,213.11 L840.15,212.69 L839.5,212.31 L838.83,211.95 L838.13,211.63 L837.41,211.35 L836.67,211.1 L835.91,210.89 L835.12,210.73 L834.32,210.6 L833.49,210.53 L832.66,210.5 L831.8,210.52 L830.94,210.6 L830.07,210.73 L829.19,210.92 L828.31,211.17 L827.44,211.48 L826.57,211.85 L825.71,212.3 L824.88,212.8 L824.06,213.38 L823.28,214.02 L822.53,214.73 L821.83,215.5 L821.17,216.34 L820.58,217.23Z" fill="#b7c31c"/><path d="M854.59,228.57 L854.23,229.58 L853.82,230.58 L853.35,231.55 L852.84,232.5 L846.12,228.62 L846.3,227.96 L846.44,227.29 L846.55,226.63 L846.63,225.98Z" fill="#f4c300"/><path d="M852.84,232.5 L852.13,233.64 L851.34,234.74 L850.49,235.78 L849.57,236.77 L844.68,231.88 L845.12,231.08 L845.51,230.27 L845.84,229.44 L846.12,228.62Z" fill="#e30613"/><path d="M836.95,223.63 L822.04,203.8 L821.76,204.01 L835.73,224.51Z" fill="#555"/><path d="M845.18,238.02 L845.93,238.17 L846.21,239.25 L846.7,239.58 L847.81,239.43 L848.24,240.06 L847.67,241.03 L847.79,241.61 L848.68,242.28 L848.53,243.03 L847.45,243.31 L847.12,243.8 L847.27,244.91 L846.64,245.34 L845.67,244.77 L845.09,244.89 L844.42,245.78 L843.67,245.63 L843.39,244.55 L842.9,244.22 L841.79,244.37 L841.36,243.74 L841.93,242.77 L841.81,242.19 L840.92,241.52 L841.07,240.77 L842.15,240.49 L842.48,240 L842.33,238.89 L842.96,238.46 L843.93,239.03 L844.51,238.91Z M846.05,241.9 A1.25,1.25 0 1 0 843.55,241.9 A1.25,1.25 0 1 0 846.05,241.9Z" fill="#d6d6d6" fill-rule="evenodd"/><path d="M852.4,239 L856.4,239 L856.4,239.9 L855.6,240.3 L855.6,242.1 L857.1,243.6 L851.7,243.6 L853.2,242.1 L853.2,240.3 L852.4,239.9Z" fill="#d6d6d6"/><rect x="853.9" y="243.6" width="1" height="2.6" fill="#d6d6d6"/><rect x="310" y="312" width="134" height="1" fill="#d9d9d9"/><path d="M404.43,301.77 L403.47,300.73 L402.58,299.64 L401.77,298.48 L401.03,297.28 L400.38,296.02 L399.82,294.73 L399.35,293.39 L398.98,292.03 L398.69,290.65 L398.5,289.25 L398.41,287.84 L398.41,286.43 L398.52,285.02 L398.71,283.62 L403.47,284.46 L403.11,285.51 L402.82,286.59 L402.63,287.71 L402.52,288.85 L402.51,290 L402.59,291.16 L402.76,292.32 L403.04,293.46 L403.41,294.59 L403.88,295.68 L404.44,296.73 L405.09,297.74 L405.82,298.69 L406.63,299.57Z" fill="#e30613"/><path d="M398.71,283.62 L398.93,282.57 L399.2,281.52 L399.52,280.49 L404.58,282.23 L404.17,282.95 L403.8,283.69 L403.47,284.46Z" fill="#f4c300"/><path d="M399.52,280.49 L400.03,279.16 L400.64,277.86 L401.33,276.61 L402.11,275.41 L402.97,274.27 L403.9,273.19 L404.91,272.17 L405.99,271.23 L407.13,270.37 L408.32,269.58 L409.57,268.89 L410.86,268.28 L412.2,267.76 L413.56,267.33 L414.95,267 L416.36,266.77 L417.79,266.64 L419.22,266.6 L420.64,266.67 L422.06,266.83 L423.47,267.09 L424.85,267.45 L426.21,267.9 L427.53,268.45 L428.81,269.09 L430.04,269.81 L431.22,270.62 L432.35,271.51 L433.4,272.47 L434.39,273.51 L435.3,274.61 L436.14,275.77 L436.89,276.98 L437.55,278.25 L438.13,279.56 L438.61,280.9 L439,282.28 L439.3,283.68 L439.49,285.09 L439.59,286.52 L439.59,287.95 L439.48,289.38 L439.28,290.79 L438.99,292.19 L438.59,293.57 L430.63,290.98 L430.69,290.12 L430.7,289.27 L430.65,288.44 L430.56,287.62 L430.42,286.82 L430.24,286.04 L430.02,285.29 L429.77,284.55 L429.47,283.84 L429.14,283.15 L428.77,282.48 L428.38,281.84 L427.95,281.23 L427.49,280.64 L427,280.08 L426.48,279.55 L425.94,279.04 L425.37,278.56 L424.77,278.11 L424.15,277.69 L423.5,277.31 L422.83,276.95 L422.13,276.63 L421.41,276.35 L420.67,276.1 L419.91,275.89 L419.12,275.73 L418.32,275.6 L417.49,275.53 L416.66,275.5 L415.8,275.52 L414.94,275.6 L414.07,275.73 L413.19,275.92 L412.31,276.17 L411.44,276.48 L410.57,276.85 L409.71,277.3 L408.88,277.8 L408.06,278.38 L407.28,279.02 L406.53,279.73 L405.83,280.5 L405.17,281.34 L404.58,282.23Z" fill="#b7c31c"/><path d="M438.59,293.57 L438.23,294.58 L437.82,295.58 L437.35,296.55 L436.84,297.5 L430.12,293.62 L430.3,292.96 L430.44,292.29 L430.55,291.63 L430.63,290.98Z" fill="#f4c300"/><path d="M436.84,297.5 L436.13,298.64 L435.34,299.74 L434.49,300.78 L433.57,301.77 L428.68,296.88 L429.12,296.08 L429.51,295.27 L429.84,294.44 L430.12,293.62Z" fill="#e30613"/><path d="M420.95,288.63 L406.04,268.8 L405.76,269.01 L419.73,289.51Z" fill="#555"/><path d="M430.18,303.02 L430.93,303.17 L431.21,304.25 L431.7,304.58 L432.81,304.43 L433.24,305.06 L432.67,306.03 L432.79,306.61 L433.68,307.28 L433.53,308.03 L432.45,308.31 L432.12,308.8 L432.27,309.91 L431.64,310.34 L430.67,309.77 L430.09,309.89 L429.42,310.78 L428.67,310.63 L428.39,309.55 L427.9,309.22 L426.79,309.37 L426.36,308.74 L426.93,307.77 L426.81,307.19 L425.92,306.52 L426.07,305.77 L427.15,305.49 L427.48,305 L427.33,303.89 L427.96,303.46 L428.93,304.03 L429.51,303.91Z M431.05,306.9 A1.25,1.25 0 1 0 428.55,306.9 A1.25,1.25 0 1 0 431.05,306.9Z" fill="#d6d6d6" fill-rule="evenodd"/><path d="M437.4,304 L441.4,304 L441.4,304.9 L440.6,305.3 L440.6,307.1 L442.1,308.6 L436.7,308.6 L438.2,307.1 L438.2,305.3 L437.4,304.9Z" fill="#d6d6d6"/><rect x="438.9" y="308.6" width="1" height="2.6" fill="#d6d6d6"/><rect x="449" y="312" width="133" height="1" fill="#d9d9d9"/><path d="M543.43,301.77 L542.47,300.73 L541.58,299.64 L540.77,298.48 L540.03,297.28 L539.38,296.02 L538.82,294.73 L538.35,293.39 L537.98,292.03 L537.69,290.65 L537.5,289.25 L537.41,287.84 L537.41,286.43 L537.52,285.02 L537.71,283.62 L542.47,284.46 L542.11,285.51 L541.82,286.59 L541.63,287.71 L541.52,288.85 L541.51,290 L541.59,291.16 L541.76,292.32 L542.04,293.46 L542.41,294.59 L542.88,295.68 L543.44,296.73 L544.09,297.74 L544.82,298.69 L545.63,299.57Z" fill="#e30613"/><path d="M537.71,283.62 L537.93,282.57 L538.2,281.52 L538.52,280.49 L543.58,282.23 L543.17,282.95 L542.8,283.69 L542.47,284.46Z" fill="#f4c300"/><path d="M538.52,280.49 L539.03,279.16 L539.64,277.86 L540.33,276.61 L541.11,275.41 L541.97,274.27 L542.9,273.19 L543.91,272.17 L544.99,271.23 L546.13,270.37 L547.32,269.58 L548.57,268.89 L549.86,268.28 L551.2,267.76 L552.56,267.33 L553.95,267 L555.36,266.77 L556.79,266.64 L558.22,266.6 L559.64,266.67 L561.06,266.83 L562.47,267.09 L563.85,267.45 L565.21,267.9 L566.53,268.45 L567.81,269.09 L569.04,269.81 L570.22,270.62 L571.35,271.51 L572.4,272.47 L573.39,273.51 L574.3,274.61 L575.14,275.77 L575.89,276.98 L576.55,278.25 L577.13,279.56 L577.61,280.9 L578,282.28 L578.3,283.68 L578.49,285.09 L578.59,286.52 L578.59,287.95 L578.48,289.38 L578.28,290.79 L577.99,292.19 L577.59,293.57 L569.63,290.98 L569.69,290.12 L569.7,289.27 L569.65,288.44 L569.56,287.62 L569.42,286.82 L569.24,286.04 L569.02,285.29 L568.77,284.55 L568.47,283.84 L568.14,283.15 L567.77,282.48 L567.38,281.84 L566.95,281.23 L566.49,280.64 L566,280.08 L565.48,279.55 L564.94,279.04 L564.37,278.56 L563.77,278.11 L563.15,277.69 L562.5,277.31 L561.83,276.95 L561.13,276.63 L560.41,276.35 L559.67,276.1 L558.91,275.89 L558.12,275.73 L557.32,275.6 L556.49,275.53 L555.66,275.5 L554.8,275.52 L553.94,275.6 L553.07,275.73 L552.19,275.92 L551.31,276.17 L550.44,276.48 L549.57,276.85 L548.71,277.3 L547.88,277.8 L547.06,278.38 L546.28,279.02 L545.53,279.73 L544.83,280.5 L544.17,281.34 L543.58,282.23Z" fill="#b7c31c"/><path d="M577.59,293.57 L577.23,294.58 L576.82,295.58 L576.35,296.55 L575.84,297.5 L569.12,293.62 L569.3,292.96 L569.44,292.29 L569.55,291.63 L569.63,290.98Z" fill="#f4c300"/><path d="M575.84,297.5 L575.13,298.64 L574.34,299.74 L573.49,300.78 L572.57,301.77 L567.68,296.88 L568.12,296.08 L568.51,295.27 L568.84,294.44 L569.12,293.62Z" fill="#e30613"/><path d="M559.98,288.59 L544.6,269.13 L544.32,269.34 L558.79,289.49Z" fill="#555"/><path d="M568.18,303.02 L568.93,303.17 L569.21,304.25 L569.7,304.58 L570.81,304.43 L571.24,305.06 L570.67,306.03 L570.79,306.61 L571.68,307.28 L571.53,308.03 L570.45,308.31 L570.12,308.8 L570.27,309.91 L569.64,310.34 L568.67,309.77 L568.09,309.89 L567.42,310.78 L566.67,310.63 L566.39,309.55 L565.9,309.22 L564.79,309.37 L564.36,308.74 L564.93,307.77 L564.81,307.19 L563.92,306.52 L564.07,305.77 L565.15,305.49 L565.48,305 L565.33,303.89 L565.96,303.46 L566.93,304.03 L567.51,303.91Z M569.05,306.9 A1.25,1.25 0 1 0 566.55,306.9 A1.25,1.25 0 1 0 569.05,306.9Z" fill="#d6d6d6" fill-rule="evenodd"/><path d="M575.4,304 L579.4,304 L579.4,304.9 L578.6,305.3 L578.6,307.1 L580.1,308.6 L574.7,308.6 L576.2,307.1 L576.2,305.3 L575.4,304.9Z" fill="#d6d6d6"/><rect x="576.9" y="308.6" width="1" height="2.6" fill="#d6d6d6"/><rect x="588" y="312" width="133" height="1" fill="#d9d9d9"/><path d="M682.43,301.77 L681.47,300.73 L680.58,299.64 L679.77,298.48 L679.03,297.28 L678.38,296.02 L677.82,294.73 L677.35,293.39 L676.98,292.03 L676.69,290.65 L676.5,289.25 L676.41,287.84 L676.41,286.43 L676.52,285.02 L676.71,283.62 L681.47,284.46 L681.11,285.51 L680.82,286.59 L680.63,287.71 L680.52,288.85 L680.51,290 L680.59,291.16 L680.76,292.32 L681.04,293.46 L681.41,294.59 L681.88,295.68 L682.44,296.73 L683.09,297.74 L683.82,298.69 L684.63,299.57Z" fill="#e30613"/><path d="M676.71,283.62 L676.93,282.57 L677.2,281.52 L677.52,280.49 L682.58,282.23 L682.17,282.95 L681.8,283.69 L681.47,284.46Z" fill="#f4c300"/><path d="M677.52,280.49 L678.03,279.16 L678.64,277.86 L679.33,276.61 L680.11,275.41 L680.97,274.27 L681.9,273.19 L682.91,272.17 L683.99,271.23 L685.13,270.37 L686.32,269.58 L687.57,268.89 L688.86,268.28 L690.2,267.76 L691.56,267.33 L692.95,267 L694.36,266.77 L695.79,266.64 L697.22,266.6 L698.64,266.67 L700.06,266.83 L701.47,267.09 L702.85,267.45 L704.21,267.9 L705.53,268.45 L706.81,269.09 L708.04,269.81 L709.22,270.62 L710.35,271.51 L711.4,272.47 L712.39,273.51 L713.3,274.61 L714.14,275.77 L714.89,276.98 L715.55,278.25 L716.13,279.56 L716.61,280.9 L717,282.28 L717.3,283.68 L717.49,285.09 L717.59,286.52 L717.59,287.95 L717.48,289.38 L717.28,290.79 L716.99,292.19 L716.59,293.57 L708.63,290.98 L708.69,290.12 L708.7,289.27 L708.65,288.44 L708.56,287.62 L708.42,286.82 L708.24,286.04 L708.02,285.29 L707.77,284.55 L707.47,283.84 L707.14,283.15 L706.77,282.48 L706.38,281.84 L705.95,281.23 L705.49,280.64 L705,280.08 L704.48,279.55 L703.94,279.04 L703.37,278.56 L702.77,278.11 L702.15,277.69 L701.5,277.31 L700.83,276.95 L700.13,276.63 L699.41,276.35 L698.67,276.1 L697.91,275.89 L697.12,275.73 L696.32,275.6 L695.49,275.53 L694.66,275.5 L693.8,275.52 L692.94,275.6 L692.07,275.73 L691.19,275.92 L690.31,276.17 L689.44,276.48 L688.57,276.85 L687.71,277.3 L686.88,277.8 L686.06,278.38 L685.28,279.02 L684.53,279.73 L683.83,280.5 L683.17,281.34 L682.58,282.23Z" fill="#b7c31c"/><path d="M716.59,293.57 L716.23,294.58 L715.82,295.58 L715.35,296.55 L714.84,297.5 L708.12,293.62 L708.3,292.96 L708.44,292.29 L708.55,291.63 L708.63,290.98Z" fill="#f4c300"/><path d="M714.84,297.5 L714.13,298.64 L713.34,299.74 L712.49,300.78 L711.57,301.77 L706.68,296.88 L707.12,296.08 L707.51,295.27 L707.84,294.44 L708.12,293.62Z" fill="#e30613"/><path d="M698.95,288.63 L684.04,268.8 L683.76,269.01 L697.73,289.51Z" fill="#555"/><path d="M707.18,303.02 L707.93,303.17 L708.21,304.25 L708.7,304.58 L709.81,304.43 L710.24,305.06 L709.67,306.03 L709.79,306.61 L710.68,307.28 L710.53,308.03 L709.45,308.31 L709.12,308.8 L709.27,309.91 L708.64,310.34 L707.67,309.77 L707.09,309.89 L706.42,310.78 L705.67,310.63 L705.39,309.55 L704.9,309.22 L703.79,309.37 L703.36,308.74 L703.93,307.77 L703.81,307.19 L702.92,306.52 L703.07,305.77 L704.15,305.49 L704.48,305 L704.33,303.89 L704.96,303.46 L705.93,304.03 L706.51,303.91Z M708.05,306.9 A1.25,1.25 0 1 0 705.55,306.9 A1.25,1.25 0 1 0 708.05,306.9Z" fill="#d6d6d6" fill-rule="evenodd"/><path d="M714.4,304 L718.4,304 L718.4,304.9 L717.6,305.3 L717.6,307.1 L719.1,308.6 L713.7,308.6 L715.2,307.1 L715.2,305.3 L714.4,304.9Z" fill="#d6d6d6"/><rect x="715.9" y="308.6" width="1" height="2.6" fill="#d6d6d6"/><rect x="726" y="312" width="133" height="1" fill="#d9d9d9"/><path d="M820.43,301.77 L819.47,300.73 L818.58,299.64 L817.77,298.48 L817.03,297.28 L816.38,296.02 L815.82,294.73 L815.35,293.39 L814.98,292.03 L814.69,290.65 L814.5,289.25 L814.41,287.84 L814.41,286.43 L814.52,285.02 L814.71,283.62 L819.47,284.46 L819.11,285.51 L818.82,286.59 L818.63,287.71 L818.52,288.85 L818.51,290 L818.59,291.16 L818.76,292.32 L819.04,293.46 L819.41,294.59 L819.88,295.68 L820.44,296.73 L821.09,297.74 L821.82,298.69 L822.63,299.57Z" fill="#e30613"/><path d="M814.71,283.62 L814.93,282.57 L815.2,281.52 L815.52,280.49 L820.58,282.23 L820.17,282.95 L819.8,283.69 L819.47,284.46Z" fill="#f4c300"/><path d="M815.52,280.49 L816.03,279.16 L816.64,277.86 L817.33,276.61 L818.11,275.41 L818.97,274.27 L819.9,273.19 L820.91,272.17 L821.99,271.23 L823.13,270.37 L824.32,269.58 L825.57,268.89 L826.86,268.28 L828.2,267.76 L829.56,267.33 L830.95,267 L832.36,266.77 L833.79,266.64 L835.22,266.6 L836.64,266.67 L838.06,266.83 L839.47,267.09 L840.85,267.45 L842.21,267.9 L843.53,268.45 L844.81,269.09 L846.04,269.81 L847.22,270.62 L848.35,271.51 L849.4,272.47 L850.39,273.51 L851.3,274.61 L852.14,275.77 L852.89,276.98 L853.55,278.25 L854.13,279.56 L854.61,280.9 L855,282.28 L855.3,283.68 L855.49,285.09 L855.59,286.52 L855.59,287.95 L855.48,289.38 L855.28,290.79 L854.99,292.19 L854.59,293.57 L846.63,290.98 L846.69,290.12 L846.7,289.27 L846.65,288.44 L846.56,287.62 L846.42,286.82 L846.24,286.04 L846.02,285.29 L845.77,284.55 L845.47,283.84 L845.14,283.15 L844.77,282.48 L844.38,281.84 L843.95,281.23 L843.49,280.64 L843,280.08 L842.48,279.55 L841.94,279.04 L841.37,278.56 L840.77,278.11 L840.15,277.69 L839.5,277.31 L838.83,276.95 L838.13,276.63 L837.41,276.35 L836.67,276.1 L835.91,275.89 L835.12,275.73 L834.32,275.6 L833.49,275.53 L832.66,275.5 L831.8,275.52 L830.94,275.6 L830.07,275.73 L829.19,275.92 L828.31,276.17 L827.44,276.48 L826.57,276.85 L825.71,277.3 L824.88,277.8 L824.06,278.38 L823.28,279.02 L822.53,279.73 L821.83,280.5 L821.17,281.34 L820.58,282.23Z" fill="#b7c31c"/><path d="M854.59,293.57 L854.23,294.58 L853.82,295.58 L853.35,296.55 L852.84,297.5 L846.12,293.62 L846.3,292.96 L846.44,292.29 L846.55,291.63 L846.63,290.98Z" fill="#f4c300"/><path d="M852.84,297.5 L852.13,298.64 L851.34,299.74 L850.49,300.78 L849.57,301.77 L844.68,296.88 L845.12,296.08 L845.51,295.27 L845.84,294.44 L846.12,293.62Z" fill="#e30613"/><path d="M836.95,288.63 L822.04,268.8 L821.76,269.01 L835.73,289.51Z" fill="#555"/><path d="M845.18,303.02 L845.93,303.17 L846.21,304.25 L846.7,304.58 L847.81,304.43 L848.24,305.06 L847.67,306.03 L847.79,306.61 L848.68,307.28 L848.53,308.03 L847.45,308.31 L847.12,308.8 L847.27,309.91 L846.64,310.34 L845.67,309.77 L845.09,309.89 L844.42,310.78 L843.67,310.63 L843.39,309.55 L842.9,309.22 L841.79,309.37 L841.36,308.74 L841.93,307.77 L841.81,307.19 L840.92,306.52 L841.07,305.77 L842.15,305.49 L842.48,305 L842.33,303.89 L842.96,303.46 L843.93,304.03 L844.51,303.91Z M846.05,306.9 A1.25,1.25 0 1 0 843.55,306.9 A1.25,1.25 0 1 0 846.05,306.9Z" fill="#d6d6d6" fill-rule="evenodd"/><path d="M852.4,304 L856.4,304 L856.4,304.9 L855.6,305.3 L855.6,307.1 L857.1,308.6 L851.7,308.6 L853.2,307.1 L853.2,305.3 L852.4,304.9Z" fill="#d6d6d6"/><rect x="853.9" y="308.6" width="1" height="2.6" fill="#d6d6d6"/><rect x="310" y="378" width="134" height="1" fill="#d9d9d9"/><path d="M419,333.8 A19.4,19.4 0 0 1 438.4,353.2 L433.2,353.2 A14.2,14.2 0 0 0 419,339Z" fill="#b7c31c"/><path d="M438.4,353.2 A19.4,19.4 0 0 1 419,372.6 L419,367.4 A14.2,14.2 0 0 0 433.2,353.2Z" fill="#f4c300"/><path d="M419,372.6 A19.4,19.4 0 0 1 399.6,353.2 L404.8,353.2 A14.2,14.2 0 0 0 419,367.4Z" fill="#e30613"/><path d="M399.6,353.2 A19.4,19.4 0 0 1 419,333.8 L419,339 A14.2,14.2 0 0 0 404.8,353.2Z" fill="#e30613"/><line x1="419" y1="345.44" x2="419" y2="331.8" stroke="#fff" stroke-width="2"/><line x1="426.76" y1="353.2" x2="440.4" y2="353.2" stroke="#fff" stroke-width="2"/><line x1="419" y1="360.96" x2="419" y2="374.6" stroke="#fff" stroke-width="2"/><line x1="411.24" y1="353.2" x2="397.6" y2="353.2" stroke="#fff" stroke-width="2"/><path d="M418.47,354.79 L434.33,338.12 L434.08,337.87 L417.41,353.73Z" fill="#555"/><path d="M430.18,369.02 L430.93,369.17 L431.21,370.25 L431.7,370.58 L432.81,370.43 L433.24,371.06 L432.67,372.03 L432.79,372.61 L433.68,373.28 L433.53,374.03 L432.45,374.31 L432.12,374.8 L432.27,375.91 L431.64,376.34 L430.67,375.77 L430.09,375.89 L429.42,376.78 L428.67,376.63 L428.39,375.55 L427.9,375.22 L426.79,375.37 L426.36,374.74 L426.93,373.77 L426.81,373.19 L425.92,372.52 L426.07,371.77 L427.15,371.49 L427.48,371 L427.33,369.89 L427.96,369.46 L428.93,370.03 L429.51,369.91Z M431.05,372.9 A1.25,1.25 0 1 0 428.55,372.9 A1.25,1.25 0 1 0 431.05,372.9Z" fill="#d6d6d6" fill-rule="evenodd"/><path d="M437.4,370 L441.4,370 L441.4,370.9 L440.6,371.3 L440.6,373.1 L442.1,374.6 L436.7,374.6 L438.2,373.1 L438.2,371.3 L437.4,370.9Z" fill="#d6d6d6"/><rect x="438.9" y="374.6" width="1" height="2.6" fill="#d6d6d6"/><rect x="449" y="378" width="133" height="1" fill="#d9d9d9"/><path d="M543.43,367.77 L542.46,366.72 L541.56,365.61 L540.74,364.45 L540,363.22 L539.35,361.95 L538.79,360.64 L538.32,359.29 L537.95,357.92 L537.67,356.52 L537.49,355.1 L537.41,353.68 L537.42,352.25 L537.54,350.83 L537.75,349.41 L538.06,348.02 L538.47,346.65 L538.97,345.32 L539.56,344.02 L540.24,342.76 L541.01,341.56 L541.85,340.41 L542.78,339.32 L543.77,338.3 L544.84,337.35 L545.97,336.48 L547.16,335.69 L548.39,334.98 L549.68,334.36 L551,333.82 L552.36,333.39 L553.75,333.04 L555.15,332.8 L556.57,332.65 L558,332.6 L559.43,332.65 L560.85,332.8 L562.25,333.04 L563.64,333.39 L565,333.82 L566.32,334.36 L567.61,334.98 L568.84,335.69 L570.03,336.48 L571.16,337.35 L572.23,338.3 L573.22,339.32 L574.15,340.41 L574.99,341.56 L575.76,342.76 L576.44,344.02 L577.03,345.32 L577.53,346.65 L577.94,348.02 L578.25,349.41 L578.46,350.83 L578.58,352.25 L578.59,353.68 L578.51,355.1 L578.33,356.52 L578.05,357.92 L577.68,359.29 L577.21,360.64 L576.65,361.95 L576,363.22 L575.26,364.45 L574.44,365.61 L573.54,366.72 L572.57,367.77 L567.68,362.88 L568.15,362.03 L568.55,361.17 L568.89,360.3 L569.17,359.42 L569.39,358.55 L569.55,357.67 L569.65,356.81 L569.7,355.95 L569.69,355.11 L569.64,354.28 L569.54,353.47 L569.39,352.67 L569.21,351.9 L568.98,351.15 L568.71,350.42 L568.41,349.71 L568.07,349.03 L567.7,348.37 L567.3,347.73 L566.87,347.12 L566.41,346.54 L565.91,345.99 L565.39,345.46 L564.85,344.96 L564.27,344.48 L563.67,344.04 L563.05,343.63 L562.4,343.25 L561.72,342.9 L561.02,342.58 L560.3,342.31 L559.55,342.07 L558.79,341.86 L558,341.71 L557.19,341.59 L556.37,341.52 L555.53,341.5 L554.68,341.53 L553.82,341.61 L552.95,341.75 L552.07,341.95 L551.19,342.21 L550.32,342.53 L549.45,342.91 L548.6,343.36 L547.77,343.87 L546.96,344.46 L546.18,345.11 L545.44,345.82 L544.75,346.6 L544.1,347.44 L543.51,348.34 L542.99,349.3 L542.53,350.31 L542.15,351.36 L541.86,352.45 L541.65,353.58 L541.53,354.73 L541.5,355.89 L541.58,357.06 L541.75,358.23 L542.02,359.39 L542.39,360.53 L542.86,361.63 L543.42,362.7 L544.07,363.72 L544.81,364.68 L545.63,365.57Z" fill="#f4c300"/><path d="M555.84,352.1 L573.79,369.23 L574.03,368.99 L556.9,351.04Z" fill="#555"/><path d="M568.18,369.02 L568.93,369.17 L569.21,370.25 L569.7,370.58 L570.81,370.43 L571.24,371.06 L570.67,372.03 L570.79,372.61 L571.68,373.28 L571.53,374.03 L570.45,374.31 L570.12,374.8 L570.27,375.91 L569.64,376.34 L568.67,375.77 L568.09,375.89 L567.42,376.78 L566.67,376.63 L566.39,375.55 L565.9,375.22 L564.79,375.37 L564.36,374.74 L564.93,373.77 L564.81,373.19 L563.92,372.52 L564.07,371.77 L565.15,371.49 L565.48,371 L565.33,369.89 L565.96,369.46 L566.93,370.03 L567.51,369.91Z M569.05,372.9 A1.25,1.25 0 1 0 566.55,372.9 A1.25,1.25 0 1 0 569.05,372.9Z" fill="#d6d6d6" fill-rule="evenodd"/><path d="M575.4,370 L579.4,370 L579.4,370.9 L578.6,371.3 L578.6,373.1 L580.1,374.6 L574.7,374.6 L576.2,373.1 L576.2,371.3 L575.4,370.9Z" fill="#d6d6d6"/><rect x="576.9" y="374.6" width="1" height="2.6" fill="#d6d6d6"/><rect x="588" y="378" width="133" height="1" fill="#d9d9d9"/><path d="M697,333.8 A19.4,19.4 0 0 1 713.8,362.9 L709.3,360.3 A14.2,14.2 0 0 0 697,339Z" fill="#b7c31c"/><path d="M713.8,362.9 A19.4,19.4 0 0 1 680.2,362.9 L684.7,360.3 A14.2,14.2 0 0 0 709.3,360.3Z" fill="#e30613"/><path d="M680.2,362.9 A19.4,19.4 0 0 1 697,333.8 L697,339 A14.2,14.2 0 0 0 684.7,360.3Z" fill="#e30613"/><line x1="697" y1="345.44" x2="697" y2="331.8" stroke="#fff" stroke-width="2"/><line x1="703.72" y1="357.08" x2="715.53" y2="363.9" stroke="#fff" stroke-width="2"/><line x1="690.28" y1="357.08" x2="678.47" y2="363.9" stroke="#fff" stroke-width="2"/><path d="M696.08,354.6 L715.71,342.6 L715.53,342.3 L695.33,353.3Z" fill="#555"/><path d="M707.18,369.02 L707.93,369.17 L708.21,370.25 L708.7,370.58 L709.81,370.43 L710.24,371.06 L709.67,372.03 L709.79,372.61 L710.68,373.28 L710.53,374.03 L709.45,374.31 L709.12,374.8 L709.27,375.91 L708.64,376.34 L707.67,375.77 L707.09,375.89 L706.42,376.78 L705.67,376.63 L705.39,375.55 L704.9,375.22 L703.79,375.37 L703.36,374.74 L703.93,373.77 L703.81,373.19 L702.92,372.52 L703.07,371.77 L704.15,371.49 L704.48,371 L704.33,369.89 L704.96,369.46 L705.93,370.03 L706.51,369.91Z M708.05,372.9 A1.25,1.25 0 1 0 705.55,372.9 A1.25,1.25 0 1 0 708.05,372.9Z" fill="#d6d6d6" fill-rule="evenodd"/><path d="M714.4,370 L718.4,370 L718.4,370.9 L717.6,371.3 L717.6,373.1 L719.1,374.6 L713.7,374.6 L715.2,373.1 L715.2,371.3 L714.4,370.9Z" fill="#d6d6d6"/><rect x="715.9" y="374.6" width="1" height="2.6" fill="#d6d6d6"/><rect x="726" y="378" width="133" height="1" fill="#d9d9d9"/><path d="M835,333.8 A19.4,19.4 0 0 1 851.8,362.9 L847.3,360.3 A14.2,14.2 0 0 0 835,339Z" fill="#b7c31c"/><path d="M851.8,362.9 A19.4,19.4 0 0 1 818.2,362.9 L822.7,360.3 A14.2,14.2 0 0 0 847.3,360.3Z" fill="#e30613"/><path d="M818.2,362.9 A19.4,19.4 0 0 1 835,333.8 L835,339 A14.2,14.2 0 0 0 822.7,360.3Z" fill="#e30613"/><line x1="835" y1="345.44" x2="835" y2="331.8" stroke="#fff" stroke-width="2"/><line x1="841.72" y1="357.08" x2="853.53" y2="363.9" stroke="#fff" stroke-width="2"/><line x1="828.28" y1="357.08" x2="816.47" y2="363.9" stroke="#fff" stroke-width="2"/><path d="M834.08,354.6 L853.71,342.6 L853.53,342.3 L833.33,353.3Z" fill="#555"/><path d="M845.18,369.02 L845.93,369.17 L846.21,370.25 L846.7,370.58 L847.81,370.43 L848.24,371.06 L847.67,372.03 L847.79,372.61 L848.68,373.28 L848.53,374.03 L847.45,374.31 L847.12,374.8 L847.27,375.91 L846.64,376.34 L845.67,375.77 L845.09,375.89 L844.42,376.78 L843.67,376.63 L843.39,375.55 L842.9,375.22 L841.79,375.37 L841.36,374.74 L841.93,373.77 L841.81,373.19 L840.92,372.52 L841.07,371.77 L842.15,371.49 L842.48,371 L842.33,369.89 L842.96,369.46 L843.93,370.03 L844.51,369.91Z M846.05,372.9 A1.25,1.25 0 1 0 843.55,372.9 A1.25,1.25 0 1 0 846.05,372.9Z" fill="#d6d6d6" fill-rule="evenodd"/><path d="M852.4,370 L856.4,370 L856.4,370.9 L855.6,371.3 L855.6,373.1 L857.1,374.6 L851.7,374.6 L853.2,373.1 L853.2,371.3 L852.4,370.9Z" fill="#d6d6d6"/><rect x="853.9" y="374.6" width="1" height="2.6" fill="#d6d6d6"/><rect x="34" y="444" width="133" height="1" fill="#d9d9d9"/><path d="M143,399.8 A19.4,19.4 0 0 1 156.72,405.48 L153.04,409.16 A14.2,14.2 0 0 0 143,405Z" fill="#b7c31c"/><path d="M156.72,405.48 A19.4,19.4 0 0 1 162.4,419.2 L157.2,419.2 A14.2,14.2 0 0 0 153.04,409.16Z" fill="#b7c31c"/><path d="M162.4,419.2 A19.4,19.4 0 0 1 156.72,432.92 L153.04,429.24 A14.2,14.2 0 0 0 157.2,419.2Z" fill="#b7c31c"/><path d="M156.72,432.92 A19.4,19.4 0 0 1 143,438.6 L143,433.4 A14.2,14.2 0 0 0 153.04,429.24Z" fill="#b7c31c"/><path d="M143,438.6 A19.4,19.4 0 0 1 129.28,432.92 L132.96,429.24 A14.2,14.2 0 0 0 143,433.4Z" fill="#f4c300"/><path d="M129.28,432.92 A19.4,19.4 0 0 1 123.6,419.2 L128.8,419.2 A14.2,14.2 0 0 0 132.96,429.24Z" fill="#f4c300"/><path d="M123.6,419.2 A19.4,19.4 0 0 1 129.28,405.48 L132.96,409.16 A14.2,14.2 0 0 0 128.8,419.2Z" fill="#e30613"/><path d="M129.28,405.48 A19.4,19.4 0 0 1 143,399.8 L143,405 A14.2,14.2 0 0 0 132.96,409.16Z" fill="#e30613"/><line x1="143" y1="411.44" x2="143" y2="397.8" stroke="#fff" stroke-width="2"/><line x1="148.49" y1="413.71" x2="158.13" y2="404.07" stroke="#fff" stroke-width="2"/><line x1="150.76" y1="419.2" x2="164.4" y2="419.2" stroke="#fff" stroke-width="2"/><line x1="148.49" y1="424.69" x2="158.13" y2="434.33" stroke="#fff" stroke-width="2"/><line x1="143" y1="426.96" x2="143" y2="440.6" stroke="#fff" stroke-width="2"/><line x1="137.51" y1="424.69" x2="127.87" y2="434.33" stroke="#fff" stroke-width="2"/><line x1="135.24" y1="419.2" x2="121.6" y2="419.2" stroke="#fff" stroke-width="2"/><line x1="137.51" y1="413.71" x2="127.87" y2="404.07" stroke="#fff" stroke-width="2"/><path d="M143.13,420.87 L151.22,399.33 L150.89,399.2 L141.74,420.31Z" fill="#555"/><path d="M153.18,435.02 L153.93,435.17 L154.21,436.25 L154.7,436.58 L155.81,436.43 L156.24,437.06 L155.67,438.03 L155.79,438.61 L156.68,439.28 L156.53,440.03 L155.45,440.31 L155.12,440.8 L155.27,441.91 L154.64,442.34 L153.67,441.77 L153.09,441.89 L152.42,442.78 L151.67,442.63 L151.39,441.55 L150.9,441.22 L149.79,441.37 L149.36,440.74 L149.93,439.77 L149.81,439.19 L148.92,438.52 L149.07,437.77 L150.15,437.49 L150.48,437 L150.33,435.89 L150.96,435.46 L151.93,436.03 L152.51,435.91Z M154.05,438.9 A1.25,1.25 0 1 0 151.55,438.9 A1.25,1.25 0 1 0 154.05,438.9Z" fill="#d6d6d6" fill-rule="evenodd"/><path d="M160.4,436 L164.4,436 L164.4,436.9 L163.6,437.3 L163.6,439.1 L165.1,440.6 L159.7,440.6 L161.2,439.1 L161.2,437.3 L160.4,436.9Z" fill="#d6d6d6"/><rect x="161.9" y="440.6" width="1" height="2.6" fill="#d6d6d6"/><rect x="173" y="444" width="133" height="1" fill="#d9d9d9"/><path d="M267.43,433.77 L266.46,432.72 L265.56,431.61 L264.74,430.45 L264,429.22 L263.35,427.95 L262.79,426.64 L262.32,425.29 L261.95,423.92 L261.67,422.52 L261.49,421.1 L261.41,419.68 L261.42,418.25 L261.54,416.83 L261.75,415.41 L262.06,414.02 L262.47,412.65 L262.97,411.32 L263.56,410.02 L264.24,408.76 L265.01,407.56 L265.85,406.41 L266.78,405.32 L267.77,404.3 L268.84,403.35 L269.97,402.48 L271.16,401.69 L272.39,400.98 L273.68,400.36 L275,399.82 L276.36,399.39 L277.75,399.04 L279.15,398.8 L280.57,398.65 L282,398.6 L283.43,398.65 L284.85,398.8 L286.25,399.04 L287.64,399.39 L289,399.82 L290.32,400.36 L291.61,400.98 L292.84,401.69 L294.03,402.48 L295.16,403.35 L296.23,404.3 L297.22,405.32 L298.15,406.41 L298.99,407.56 L299.76,408.76 L300.44,410.02 L301.03,411.32 L301.53,412.65 L301.94,414.02 L302.25,415.41 L302.46,416.83 L302.58,418.25 L302.59,419.68 L302.51,421.1 L302.33,422.52 L302.05,423.92 L301.68,425.29 L301.21,426.64 L300.65,427.95 L300,429.22 L299.26,430.45 L298.44,431.61 L297.54,432.72 L296.57,433.77 L291.68,428.88 L292.15,428.03 L292.55,427.17 L292.89,426.3 L293.17,425.42 L293.39,424.55 L293.55,423.67 L293.65,422.81 L293.7,421.95 L293.69,421.11 L293.64,420.28 L293.54,419.47 L293.39,418.67 L293.21,417.9 L292.98,417.15 L292.71,416.42 L292.41,415.71 L292.07,415.03 L291.7,414.37 L291.3,413.73 L290.87,413.12 L290.41,412.54 L289.91,411.99 L289.39,411.46 L288.85,410.96 L288.27,410.48 L287.67,410.04 L287.05,409.63 L286.4,409.25 L285.72,408.9 L285.02,408.58 L284.3,408.31 L283.55,408.07 L282.79,407.86 L282,407.71 L281.19,407.59 L280.37,407.52 L279.53,407.5 L278.68,407.53 L277.82,407.61 L276.95,407.75 L276.07,407.95 L275.19,408.21 L274.32,408.53 L273.45,408.91 L272.6,409.36 L271.77,409.87 L270.96,410.46 L270.18,411.11 L269.44,411.82 L268.75,412.6 L268.1,413.44 L267.51,414.34 L266.99,415.3 L266.53,416.31 L266.15,417.36 L265.86,418.45 L265.65,419.58 L265.53,420.73 L265.5,421.89 L265.58,423.06 L265.75,424.23 L266.02,425.39 L266.39,426.53 L266.86,427.63 L267.42,428.7 L268.07,429.72 L268.81,430.68 L269.63,431.57Z" fill="#b7c31c"/><path d="M284.23,418.25 L259.57,420.99 L259.6,421.34 L284.36,419.75Z" fill="#555"/><path d="M292.18,435.02 L292.93,435.17 L293.21,436.25 L293.7,436.58 L294.81,436.43 L295.24,437.06 L294.67,438.03 L294.79,438.61 L295.68,439.28 L295.53,440.03 L294.45,440.31 L294.12,440.8 L294.27,441.91 L293.64,442.34 L292.67,441.77 L292.09,441.89 L291.42,442.78 L290.67,442.63 L290.39,441.55 L289.9,441.22 L288.79,441.37 L288.36,440.74 L288.93,439.77 L288.81,439.19 L287.92,438.52 L288.07,437.77 L289.15,437.49 L289.48,437 L289.33,435.89 L289.96,435.46 L290.93,436.03 L291.51,435.91Z M293.05,438.9 A1.25,1.25 0 1 0 290.55,438.9 A1.25,1.25 0 1 0 293.05,438.9Z" fill="#d6d6d6" fill-rule="evenodd"/><path d="M299.4,436 L303.4,436 L303.4,436.9 L302.6,437.3 L302.6,439.1 L304.1,440.6 L298.7,440.6 L300.2,439.1 L300.2,437.3 L299.4,436.9Z" fill="#d6d6d6"/><rect x="300.9" y="440.6" width="1" height="2.6" fill="#d6d6d6"/><rect x="311" y="444" width="133" height="1" fill="#d9d9d9"/><path d="M405.43,433.77 L404.57,432.85 L403.77,431.88 L406.24,429.95 L406.9,430.79 L407.63,431.57Z" fill="#e30613"/><path d="M403.77,431.88 L403.33,431.31 L402.92,430.72 L405.56,428.94 L405.89,429.45 L406.24,429.95Z" fill="#f4c300"/><path d="M402.92,430.72 L402.17,429.52 L401.5,428.27 L400.92,426.97 L400.43,425.64 L400.04,424.28 L399.73,422.89 L399.53,421.49 L399.42,420.08 L399.41,418.66 L399.49,417.24 L399.68,415.84 L399.96,414.45 L400.33,413.08 L400.8,411.74 L401.36,410.43 L402.01,409.17 L402.74,407.96 L403.55,406.8 L404.44,405.7 L405.41,404.66 L406.45,403.69 L407.55,402.79 L408.7,401.97 L409.92,401.24 L411.18,400.59 L412.48,400.02 L413.81,399.55 L415.18,399.17 L416.57,398.89 L417.98,398.7 L419.39,398.61 L420.81,398.62 L422.22,398.72 L423.63,398.92 L425.02,399.22 L426.38,399.61 L427.71,400.1 L429.01,400.67 L430.26,401.34 L431.47,402.09 L432.62,402.91 L433.71,403.82 L434.73,404.8 L435.69,405.85 L436.57,406.96 L437.37,408.13 L438.09,409.35 L438.73,410.62 L439.27,411.93 L439.73,413.27 L440.09,414.64 L440.36,416.04 L440.52,417.44 L440.6,418.86 L440.57,420.28 L431.59,419.81 L431.46,419.01 L431.29,418.23 L431.08,417.48 L430.84,416.74 L430.55,416.03 L430.23,415.34 L429.88,414.67 L429.5,414.03 L429.08,413.41 L428.63,412.82 L428.16,412.26 L427.66,411.72 L427.13,411.2 L426.57,410.72 L425.99,410.26 L425.38,409.84 L424.74,409.44 L424.09,409.08 L423.4,408.75 L422.7,408.45 L421.97,408.19 L421.22,407.97 L420.45,407.79 L419.66,407.65 L418.85,407.56 L418.03,407.51 L417.19,407.51 L416.34,407.56 L415.47,407.66 L414.61,407.82 L413.74,408.04 L412.86,408.32 L412,408.66 L411.14,409.06 L410.3,409.53 L409.48,410.07 L408.69,410.67 L407.93,411.34 L407.21,412.07 L406.53,412.87 L405.91,413.72 L405.34,414.64 L404.84,415.6 L404.41,416.62 L404.06,417.68 L403.79,418.77 L403.6,419.9 L403.51,421.04 L403.51,422.2 L403.61,423.37 L403.81,424.53 L404.1,425.68 L404.49,426.8 L404.98,427.89 L405.56,428.94Z" fill="#b7c31c"/><path d="M440.57,420.28 L440.46,421.58 L440.27,422.87 L440,424.14 L439.65,425.39 L439.22,426.62 L438.71,427.82 L438.13,428.99 L437.47,430.12 L430.98,426.06 L431.22,425.26 L431.41,424.46 L431.55,423.66 L431.64,422.87 L431.69,422.09 L431.7,421.32 L431.66,420.55 L431.59,419.81Z" fill="#f4c300"/><path d="M437.47,430.12 L436.82,431.09 L436.12,432.02 L435.37,432.92 L434.57,433.77 L429.68,428.88 L430.07,428.19 L430.41,427.48 L430.72,426.77 L430.98,426.06Z" fill="#e30613"/><path d="M420.59,421.55 L421.74,396.77 L421.39,396.74 L419.09,421.44Z" fill="#555"/><path d="M430.18,435.02 L430.93,435.17 L431.21,436.25 L431.7,436.58 L432.81,436.43 L433.24,437.06 L432.67,438.03 L432.79,438.61 L433.68,439.28 L433.53,440.03 L432.45,440.31 L432.12,440.8 L432.27,441.91 L431.64,442.34 L430.67,441.77 L430.09,441.89 L429.42,442.78 L428.67,442.63 L428.39,441.55 L427.9,441.22 L426.79,441.37 L426.36,440.74 L426.93,439.77 L426.81,439.19 L425.92,438.52 L426.07,437.77 L427.15,437.49 L427.48,437 L427.33,435.89 L427.96,435.46 L428.93,436.03 L429.51,435.91Z M431.05,438.9 A1.25,1.25 0 1 0 428.55,438.9 A1.25,1.25 0 1 0 431.05,438.9Z" fill="#d6d6d6" fill-rule="evenodd"/><path d="M437.4,436 L441.4,436 L441.4,436.9 L440.6,437.3 L440.6,439.1 L442.1,440.6 L436.7,440.6 L438.2,439.1 L438.2,437.3 L437.4,436.9Z" fill="#d6d6d6"/><rect x="438.9" y="440.6" width="1" height="2.6" fill="#d6d6d6"/><rect x="450" y="444" width="133" height="1" fill="#d9d9d9"/><path d="M544.43,433.77 L543.57,432.85 L542.77,431.88 L545.24,429.95 L545.9,430.79 L546.63,431.57Z" fill="#e30613"/><path d="M542.77,431.88 L542.33,431.31 L541.92,430.72 L544.56,428.94 L544.89,429.45 L545.24,429.95Z" fill="#f4c300"/><path d="M541.92,430.72 L541.17,429.52 L540.5,428.27 L539.92,426.97 L539.43,425.64 L539.04,424.28 L538.73,422.89 L538.53,421.49 L538.42,420.08 L538.41,418.66 L538.49,417.24 L538.68,415.84 L538.96,414.45 L539.33,413.08 L539.8,411.74 L540.36,410.43 L541.01,409.17 L541.74,407.96 L542.55,406.8 L543.44,405.7 L544.41,404.66 L545.45,403.69 L546.55,402.79 L547.7,401.97 L548.92,401.24 L550.18,400.59 L551.48,400.02 L552.81,399.55 L554.18,399.17 L555.57,398.89 L556.98,398.7 L558.39,398.61 L559.81,398.62 L561.22,398.72 L562.63,398.92 L564.02,399.22 L565.38,399.61 L566.71,400.1 L568.01,400.67 L569.26,401.34 L570.47,402.09 L571.62,402.91 L572.71,403.82 L573.73,404.8 L574.69,405.85 L575.57,406.96 L576.37,408.13 L577.09,409.35 L577.73,410.62 L578.27,411.93 L578.73,413.27 L579.09,414.64 L579.36,416.04 L579.52,417.44 L579.6,418.86 L579.57,420.28 L570.59,419.81 L570.46,419.01 L570.29,418.23 L570.08,417.48 L569.84,416.74 L569.55,416.03 L569.23,415.34 L568.88,414.67 L568.5,414.03 L568.08,413.41 L567.63,412.82 L567.16,412.26 L566.66,411.72 L566.13,411.2 L565.57,410.72 L564.99,410.26 L564.38,409.84 L563.74,409.44 L563.09,409.08 L562.4,408.75 L561.7,408.45 L560.97,408.19 L560.22,407.97 L559.45,407.79 L558.66,407.65 L557.85,407.56 L557.03,407.51 L556.19,407.51 L555.34,407.56 L554.47,407.66 L553.61,407.82 L552.74,408.04 L551.86,408.32 L551,408.66 L550.14,409.06 L549.3,409.53 L548.48,410.07 L547.69,410.67 L546.93,411.34 L546.21,412.07 L545.53,412.87 L544.91,413.72 L544.34,414.64 L543.84,415.6 L543.41,416.62 L543.06,417.68 L542.79,418.77 L542.6,419.9 L542.51,421.04 L542.51,422.2 L542.61,423.37 L542.81,424.53 L543.1,425.68 L543.49,426.8 L543.98,427.89 L544.56,428.94Z" fill="#b7c31c"/><path d="M579.57,420.28 L579.46,421.58 L579.27,422.87 L579,424.14 L578.65,425.39 L578.22,426.62 L577.71,427.82 L577.13,428.99 L576.47,430.12 L569.98,426.06 L570.22,425.26 L570.41,424.46 L570.55,423.66 L570.64,422.87 L570.69,422.09 L570.7,421.32 L570.66,420.55 L570.59,419.81Z" fill="#f4c300"/><path d="M576.47,430.12 L575.82,431.09 L575.12,432.02 L574.37,432.92 L573.57,433.77 L568.68,428.88 L569.07,428.19 L569.41,427.48 L569.72,426.77 L569.98,426.06Z" fill="#e30613"/><path d="M559.67,421.52 L559.96,396.72 L559.61,396.71 L558.17,421.47Z" fill="#555"/><path d="M569.18,435.02 L569.93,435.17 L570.21,436.25 L570.7,436.58 L571.81,436.43 L572.24,437.06 L571.67,438.03 L571.79,438.61 L572.68,439.28 L572.53,440.03 L571.45,440.31 L571.12,440.8 L571.27,441.91 L570.64,442.34 L569.67,441.77 L569.09,441.89 L568.42,442.78 L567.67,442.63 L567.39,441.55 L566.9,441.22 L565.79,441.37 L565.36,440.74 L565.93,439.77 L565.81,439.19 L564.92,438.52 L565.07,437.77 L566.15,437.49 L566.48,437 L566.33,435.89 L566.96,435.46 L567.93,436.03 L568.51,435.91Z M570.05,438.9 A1.25,1.25 0 1 0 567.55,438.9 A1.25,1.25 0 1 0 570.05,438.9Z" fill="#d6d6d6" fill-rule="evenodd"/><path d="M576.4,436 L580.4,436 L580.4,436.9 L579.6,437.3 L579.6,439.1 L581.1,440.6 L575.7,440.6 L577.2,439.1 L577.2,437.3 L576.4,436.9Z" fill="#d6d6d6"/><rect x="577.9" y="440.6" width="1" height="2.6" fill="#d6d6d6"/><rect x="588" y="444" width="134" height="1" fill="#d9d9d9"/><path d="M682.43,433.77 L681.49,432.75 L680.61,431.68 L679.81,430.55 L679.08,429.37 L678.44,428.14 L677.88,426.87 L677.41,425.57 L680.79,424.47 L681.08,425.59 L681.45,426.69 L681.92,427.76 L682.47,428.79 L683.11,429.77 L683.83,430.7 L684.63,431.57Z" fill="#e30613"/><path d="M677.41,425.57 L677.04,424.3 L676.76,423.01 L676.55,421.71 L676.43,420.4 L676.4,419.08 L676.45,417.76 L680.95,418.08 L680.72,419.11 L680.57,420.16 L680.5,421.23 L680.52,422.3 L680.61,423.39 L680.79,424.47Z" fill="#f4c300"/><path d="M676.45,417.76 L676.6,416.35 L676.84,414.95 L677.19,413.57 L677.62,412.21 L678.15,410.89 L678.77,409.61 L679.47,408.38 L680.26,407.19 L681.13,406.07 L682.07,405 L683.09,404.01 L684.17,403.08 L685.31,402.24 L686.51,401.47 L687.76,400.79 L689.05,400.2 L690.38,399.69 L691.74,399.28 L693.13,398.97 L694.54,398.75 L695.95,398.63 L697.38,398.6 L698.8,398.68 L700.21,398.85 L701.6,399.12 L702.98,399.49 L704.32,399.95 L705.64,400.5 L706.9,401.14 L708.13,401.86 L709.3,402.67 L710.41,403.56 L711.46,404.52 L712.43,405.56 L713.34,406.65 L714.17,407.81 L714.91,409.02 L715.57,410.28 L716.14,411.58 L716.62,412.92 L717.01,414.29 L717.3,415.68 L717.49,417.09 L717.59,418.51 L717.59,419.93 L717.49,421.35 L708.65,420.42 L708.56,419.61 L708.42,418.82 L708.24,418.04 L708.03,417.29 L707.77,416.56 L707.47,415.85 L707.15,415.16 L706.78,414.5 L706.39,413.86 L705.96,413.25 L705.51,412.67 L705.02,412.11 L704.51,411.57 L703.97,411.07 L703.41,410.59 L702.82,410.14 L702.2,409.72 L701.55,409.33 L700.89,408.98 L700.2,408.66 L699.48,408.37 L698.75,408.12 L697.99,407.91 L697.21,407.74 L696.41,407.62 L695.59,407.54 L694.76,407.5 L693.92,407.52 L693.06,407.58 L692.19,407.71 L691.32,407.89 L690.45,408.13 L689.58,408.43 L688.71,408.79 L687.86,409.22 L687.02,409.71 L686.21,410.27 L685.42,410.9 L684.67,411.59 L683.96,412.34 L683.3,413.16 L682.7,414.04 L682.15,414.98 L681.67,415.97 L681.27,417 L680.95,418.08Z" fill="#b7c31c"/><path d="M717.49,421.35 L717.33,422.54 L717.1,423.72 L716.8,424.88 L716.44,426.02 L716.01,427.14 L715.52,428.23 L708.35,424.73 L708.49,424 L708.6,423.27 L708.67,422.55 L708.7,421.83 L708.69,421.12 L708.65,420.42Z" fill="#f4c300"/><path d="M715.52,428.23 L714.88,429.44 L714.16,430.6 L713.36,431.71 L712.5,432.77 L711.57,433.77 L706.68,428.88 L707.13,428.07 L707.52,427.24 L707.85,426.41 L708.13,425.57 L708.35,424.73Z" fill="#e30613"/><path d="M696.77,421.61 L706.17,398.65 L705.85,398.51 L695.39,421.01Z" fill="#555"/><path d="M708.18,435.02 L708.93,435.17 L709.21,436.25 L709.7,436.58 L710.81,436.43 L711.24,437.06 L710.67,438.03 L710.79,438.61 L711.68,439.28 L711.53,440.03 L710.45,440.31 L710.12,440.8 L710.27,441.91 L709.64,442.34 L708.67,441.77 L708.09,441.89 L707.42,442.78 L706.67,442.63 L706.39,441.55 L705.9,441.22 L704.79,441.37 L704.36,440.74 L704.93,439.77 L704.81,439.19 L703.92,438.52 L704.07,437.77 L705.15,437.49 L705.48,437 L705.33,435.89 L705.96,435.46 L706.93,436.03 L707.51,435.91Z M709.05,438.9 A1.25,1.25 0 1 0 706.55,438.9 A1.25,1.25 0 1 0 709.05,438.9Z" fill="#d6d6d6" fill-rule="evenodd"/><path d="M715.4,436 L719.4,436 L719.4,436.9 L718.6,437.3 L718.6,439.1 L720.1,440.6 L714.7,440.6 L716.2,439.1 L716.2,437.3 L715.4,436.9Z" fill="#d6d6d6"/><rect x="716.9" y="440.6" width="1" height="2.6" fill="#d6d6d6"/><rect x="727" y="444" width="133" height="1" fill="#d9d9d9"/><path d="M821.43,433.77 L820.6,432.88 L819.81,431.94 L819.08,430.96 L818.42,429.93 L817.81,428.87 L820.72,427.33 L821.17,428.25 L821.69,429.15 L822.28,430 L822.92,430.81 L823.63,431.57Z" fill="#e30613"/><path d="M817.81,428.87 L817.33,427.91 L816.9,426.92 L816.52,425.91 L816.2,424.88 L819.69,423.88 L819.86,424.76 L820.09,425.63 L820.37,426.49 L820.72,427.33Z" fill="#f4c300"/><path d="M816.2,424.88 L815.85,423.5 L815.6,422.09 L815.45,420.68 L815.4,419.25 L815.45,417.83 L815.59,416.41 L815.83,415.01 L816.17,413.63 L816.6,412.27 L817.13,410.95 L817.74,409.66 L818.44,408.42 L819.23,407.23 L820.1,406.1 L821.04,405.04 L822.06,404.04 L823.14,403.11 L824.28,402.26 L825.48,401.49 L826.73,400.81 L828.02,400.21 L829.35,399.7 L830.71,399.29 L832.1,398.97 L833.51,398.75 L834.93,398.63 L836.35,398.6 L837.78,398.68 L839.19,398.85 L840.59,399.12 L841.96,399.48 L843.31,399.94 L844.63,400.49 L845.9,401.13 L847.12,401.86 L848.29,402.67 L849.41,403.56 L850.46,404.52 L851.44,405.56 L852.34,406.66 L853.17,407.82 L853.91,409.03 L854.57,410.29 L855.15,411.6 L855.63,412.94 L856.01,414.31 L856.3,415.7 L856.49,417.11 L856.59,418.54 L856.59,419.96 L856.48,421.38 L856.28,422.79 L855.99,424.18 L847.69,422.11 L847.7,421.27 L847.65,420.44 L847.56,419.63 L847.43,418.83 L847.25,418.06 L847.03,417.3 L846.77,416.57 L846.48,415.86 L846.15,415.17 L845.79,414.51 L845.39,413.87 L844.97,413.26 L844.51,412.67 L844.03,412.11 L843.51,411.57 L842.97,411.07 L842.41,410.59 L841.81,410.14 L841.19,409.72 L840.55,409.33 L839.88,408.98 L839.19,408.66 L838.47,408.37 L837.74,408.12 L836.98,407.91 L836.2,407.74 L835.4,407.61 L834.58,407.53 L833.75,407.5 L832.9,407.52 L832.04,407.59 L831.17,407.71 L830.3,407.89 L829.42,408.13 L828.55,408.43 L827.69,408.8 L826.83,409.23 L825.99,409.73 L825.18,410.29 L824.39,410.92 L823.64,411.61 L822.94,412.37 L822.28,413.2 L821.67,414.08 L821.13,415.02 L820.65,416.01 L820.25,417.05 L819.93,418.13 L819.7,419.24 L819.55,420.38 L819.5,421.54 L819.54,422.71 L819.69,423.88Z" fill="#b7c31c"/><path d="M855.99,424.18 L855.65,425.39 L855.23,426.58 L854.75,427.74 L854.19,428.87 L847.24,425.18 L847.42,424.4 L847.55,423.63 L847.64,422.87 L847.69,422.11Z" fill="#f4c300"/><path d="M854.19,428.87 L853.58,429.93 L852.92,430.96 L852.19,431.94 L851.4,432.88 L850.57,433.77 L845.68,428.88 L846.08,428.15 L846.44,427.42 L846.76,426.67 L847.02,425.93 L847.24,425.18Z" fill="#e30613"/><path d="M834.48,421.08 L854.97,407.09 L854.77,406.8 L833.66,419.82Z" fill="#555"/><path d="M846.18,435.02 L846.93,435.17 L847.21,436.25 L847.7,436.58 L848.81,436.43 L849.24,437.06 L848.67,438.03 L848.79,438.61 L849.68,439.28 L849.53,440.03 L848.45,440.31 L848.12,440.8 L848.27,441.91 L847.64,442.34 L846.67,441.77 L846.09,441.89 L845.42,442.78 L844.67,442.63 L844.39,441.55 L843.9,441.22 L842.79,441.37 L842.36,440.74 L842.93,439.77 L842.81,439.19 L841.92,438.52 L842.07,437.77 L843.15,437.49 L843.48,437 L843.33,435.89 L843.96,435.46 L844.93,436.03 L845.51,435.91Z M847.05,438.9 A1.25,1.25 0 1 0 844.55,438.9 A1.25,1.25 0 1 0 847.05,438.9Z" fill="#d6d6d6" fill-rule="evenodd"/><path d="M853.4,436 L857.4,436 L857.4,436.9 L856.6,437.3 L856.6,439.1 L858.1,440.6 L852.7,440.6 L854.2,439.1 L854.2,437.3 L853.4,436.9Z" fill="#d6d6d6"/><rect x="854.9" y="440.6" width="1" height="2.6" fill="#d6d6d6"/><rect x="34" y="509" width="133" height="1" fill="#d9d9d9"/><path d="M128.43,498.77 L127.63,497.92 L126.88,497.02 L126.18,496.09 L125.53,495.12 L128.26,493.41 L128.76,494.26 L129.33,495.07 L129.95,495.84 L130.63,496.57Z" fill="#e30613"/><path d="M125.53,495.12 L124.93,494.08 L124.38,493.01 L123.9,491.92 L127.09,490.63 L127.41,491.58 L127.8,492.51 L128.26,493.41Z" fill="#f4c300"/><path d="M123.9,491.92 L123.41,490.57 L123.02,489.2 L122.72,487.8 L122.52,486.38 L122.41,484.95 L122.41,483.52 L122.51,482.09 L122.7,480.67 L123,479.27 L123.39,477.9 L123.87,476.55 L124.45,475.24 L125.12,473.97 L125.87,472.76 L126.71,471.59 L127.62,470.49 L128.61,469.46 L129.67,468.5 L130.79,467.61 L131.97,466.8 L133.21,466.08 L134.49,465.44 L135.81,464.89 L137.17,464.44 L138.56,464.08 L139.96,463.82 L141.39,463.66 L142.82,463.6 L144.25,463.64 L145.67,463.77 L147.08,464.01 L148.48,464.34 L149.84,464.77 L151.18,465.29 L152.47,465.9 L153.72,466.61 L154.91,467.39 L156.05,468.26 L157.13,469.21 L158.13,470.22 L159.07,471.31 L159.92,472.45 L160.7,473.66 L161.39,474.91 L161.99,476.21 L162.5,477.55 L162.91,478.92 L163.23,480.31 L163.45,481.73 L163.57,483.15 L163.6,484.59 L163.52,486.01 L163.34,487.44 L163.07,488.84 L162.7,490.22 L154.65,487.76 L154.7,486.9 L154.69,486.06 L154.63,485.23 L154.53,484.42 L154.38,483.62 L154.19,482.85 L153.96,482.09 L153.69,481.36 L153.39,480.66 L153.05,479.97 L152.67,479.31 L152.27,478.68 L151.83,478.07 L151.36,477.49 L150.87,476.93 L150.34,476.41 L149.79,475.91 L149.21,475.44 L148.61,474.99 L147.98,474.58 L147.32,474.21 L146.64,473.86 L145.94,473.55 L145.21,473.27 L144.46,473.04 L143.69,472.84 L142.9,472.69 L142.09,472.58 L141.26,472.52 L140.42,472.5 L139.56,472.54 L138.69,472.63 L137.82,472.78 L136.94,472.98 L136.06,473.25 L135.19,473.58 L134.32,473.98 L133.47,474.44 L132.64,474.96 L131.83,475.56 L131.06,476.22 L130.32,476.95 L129.63,477.74 L128.99,478.6 L128.41,479.51 L127.9,480.48 L127.45,481.5 L127.09,482.56 L126.81,483.67 L126.62,484.8 L126.51,485.95 L126.51,487.12 L126.6,488.3 L126.8,489.47 L127.09,490.63Z" fill="#b7c31c"/><path d="M162.7,490.22 L162.32,491.36 L161.87,492.47 L161.35,493.55 L154.3,489.96 L154.45,489.22 L154.57,488.49 L154.65,487.76Z" fill="#f4c300"/><path d="M161.35,493.55 L160.73,494.69 L160.04,495.78 L159.28,496.83 L158.45,497.82 L157.57,498.77 L152.68,493.88 L153.11,493.11 L153.48,492.33 L153.81,491.54 L154.08,490.75 L154.3,489.96Z" fill="#e30613"/><path d="M144.32,486.23 L137.35,462.42 L137.01,462.51 L142.87,486.62Z" fill="#555"/><path d="M153.18,500.02 L153.93,500.17 L154.21,501.25 L154.7,501.58 L155.81,501.43 L156.24,502.06 L155.67,503.03 L155.79,503.61 L156.68,504.28 L156.53,505.03 L155.45,505.31 L155.12,505.8 L155.27,506.91 L154.64,507.34 L153.67,506.77 L153.09,506.89 L152.42,507.78 L151.67,507.63 L151.39,506.55 L150.9,506.22 L149.79,506.37 L149.36,505.74 L149.93,504.77 L149.81,504.19 L148.92,503.52 L149.07,502.77 L150.15,502.49 L150.48,502 L150.33,500.89 L150.96,500.46 L151.93,501.03 L152.51,500.91Z M154.05,503.9 A1.25,1.25 0 1 0 151.55,503.9 A1.25,1.25 0 1 0 154.05,503.9Z" fill="#d6d6d6" fill-rule="evenodd"/><path d="M160.4,501 L164.4,501 L164.4,501.9 L163.6,502.3 L163.6,504.1 L165.1,505.6 L159.7,505.6 L161.2,504.1 L161.2,502.3 L160.4,501.9Z" fill="#d6d6d6"/><rect x="161.9" y="505.6" width="1" height="2.6" fill="#d6d6d6"/><rect x="173" y="509" width="133" height="1" fill="#d9d9d9"/><path d="M267.43,498.77 L266.49,497.75 L265.61,496.68 L264.81,495.55 L264.08,494.37 L263.44,493.14 L262.88,491.87 L262.41,490.57 L265.79,489.47 L266.08,490.59 L266.45,491.69 L266.92,492.76 L267.47,493.79 L268.11,494.77 L268.83,495.7 L269.63,496.57Z" fill="#e30613"/><path d="M262.41,490.57 L262.04,489.3 L261.76,488.01 L261.55,486.71 L261.43,485.4 L261.4,484.08 L261.45,482.76 L265.95,483.08 L265.72,484.11 L265.57,485.16 L265.5,486.23 L265.52,487.3 L265.61,488.39 L265.79,489.47Z" fill="#f4c300"/><path d="M261.45,482.76 L261.6,481.35 L261.84,479.95 L262.19,478.57 L262.62,477.21 L263.15,475.89 L263.77,474.61 L264.47,473.38 L265.26,472.19 L266.13,471.07 L267.07,470 L268.09,469.01 L269.17,468.08 L270.31,467.24 L271.51,466.47 L272.76,465.79 L274.05,465.2 L275.38,464.69 L276.74,464.28 L278.13,463.97 L279.54,463.75 L280.95,463.63 L282.38,463.6 L283.8,463.68 L285.21,463.85 L286.6,464.12 L287.98,464.49 L289.32,464.95 L290.64,465.5 L291.9,466.14 L293.13,466.86 L294.3,467.67 L295.41,468.56 L296.46,469.52 L297.43,470.56 L298.34,471.65 L299.17,472.81 L299.91,474.02 L300.57,475.28 L301.14,476.58 L301.62,477.92 L302.01,479.29 L302.3,480.68 L302.49,482.09 L302.59,483.51 L302.59,484.93 L302.49,486.35 L293.65,485.42 L293.56,484.61 L293.42,483.82 L293.24,483.04 L293.03,482.29 L292.77,481.56 L292.47,480.85 L292.15,480.16 L291.78,479.5 L291.39,478.86 L290.96,478.25 L290.51,477.67 L290.02,477.11 L289.51,476.57 L288.97,476.07 L288.41,475.59 L287.82,475.14 L287.2,474.72 L286.55,474.33 L285.89,473.98 L285.2,473.66 L284.48,473.37 L283.75,473.12 L282.99,472.91 L282.21,472.74 L281.41,472.62 L280.59,472.54 L279.76,472.5 L278.92,472.52 L278.06,472.58 L277.19,472.71 L276.32,472.89 L275.45,473.13 L274.58,473.43 L273.71,473.79 L272.86,474.22 L272.02,474.71 L271.21,475.27 L270.42,475.9 L269.67,476.59 L268.96,477.34 L268.3,478.16 L267.7,479.04 L267.15,479.98 L266.67,480.97 L266.27,482 L265.95,483.08Z" fill="#b7c31c"/><path d="M302.49,486.35 L302.33,487.54 L302.1,488.72 L301.8,489.88 L301.44,491.02 L301.01,492.14 L300.52,493.23 L293.35,489.73 L293.49,489 L293.6,488.27 L293.67,487.55 L293.7,486.83 L293.69,486.12 L293.65,485.42Z" fill="#f4c300"/><path d="M300.52,493.23 L299.88,494.44 L299.16,495.6 L298.36,496.71 L297.5,497.77 L296.57,498.77 L291.68,493.88 L292.13,493.07 L292.52,492.24 L292.85,491.41 L293.13,490.57 L293.35,489.73Z" fill="#e30613"/><path d="M281.56,486.58 L292.92,464.53 L292.62,464.36 L280.24,485.86Z" fill="#555"/><path d="M292.18,500.02 L292.93,500.17 L293.21,501.25 L293.7,501.58 L294.81,501.43 L295.24,502.06 L294.67,503.03 L294.79,503.61 L295.68,504.28 L295.53,505.03 L294.45,505.31 L294.12,505.8 L294.27,506.91 L293.64,507.34 L292.67,506.77 L292.09,506.89 L291.42,507.78 L290.67,507.63 L290.39,506.55 L289.9,506.22 L288.79,506.37 L288.36,505.74 L288.93,504.77 L288.81,504.19 L287.92,503.52 L288.07,502.77 L289.15,502.49 L289.48,502 L289.33,500.89 L289.96,500.46 L290.93,501.03 L291.51,500.91Z M293.05,503.9 A1.25,1.25 0 1 0 290.55,503.9 A1.25,1.25 0 1 0 293.05,503.9Z" fill="#d6d6d6" fill-rule="evenodd"/><path d="M299.4,501 L303.4,501 L303.4,501.9 L302.6,502.3 L302.6,504.1 L304.1,505.6 L298.7,505.6 L300.2,504.1 L300.2,502.3 L299.4,501.9Z" fill="#d6d6d6"/><rect x="300.9" y="505.6" width="1" height="2.6" fill="#d6d6d6"/><rect x="311" y="509" width="133" height="1" fill="#d9d9d9"/><path d="M405.43,498.77 L404.6,497.88 L403.81,496.94 L403.08,495.96 L402.42,494.93 L401.81,493.87 L404.72,492.33 L405.17,493.25 L405.69,494.15 L406.28,495 L406.92,495.81 L407.63,496.57Z" fill="#e30613"/><path d="M401.81,493.87 L401.33,492.91 L400.9,491.92 L400.52,490.91 L400.2,489.88 L403.69,488.88 L403.86,489.76 L404.09,490.63 L404.37,491.49 L404.72,492.33Z" fill="#f4c300"/><path d="M400.2,489.88 L399.85,488.5 L399.6,487.09 L399.45,485.68 L399.4,484.25 L399.45,482.83 L399.59,481.41 L399.83,480.01 L400.17,478.63 L400.6,477.27 L401.13,475.95 L401.74,474.66 L402.44,473.42 L403.23,472.23 L404.1,471.1 L405.04,470.04 L406.06,469.04 L407.14,468.11 L408.28,467.26 L409.48,466.49 L410.73,465.81 L412.02,465.21 L413.35,464.7 L414.71,464.29 L416.1,463.97 L417.51,463.75 L418.93,463.63 L420.35,463.6 L421.78,463.68 L423.19,463.85 L424.59,464.12 L425.96,464.48 L427.31,464.94 L428.63,465.49 L429.9,466.13 L431.12,466.86 L432.29,467.67 L433.41,468.56 L434.46,469.52 L435.44,470.56 L436.34,471.66 L437.17,472.82 L437.91,474.03 L438.57,475.29 L439.15,476.6 L439.63,477.94 L440.01,479.31 L440.3,480.7 L440.49,482.11 L440.59,483.54 L440.59,484.96 L440.48,486.38 L440.28,487.79 L439.99,489.18 L431.69,487.11 L431.7,486.27 L431.65,485.44 L431.56,484.63 L431.43,483.83 L431.25,483.06 L431.03,482.3 L430.77,481.57 L430.48,480.86 L430.15,480.17 L429.79,479.51 L429.39,478.87 L428.97,478.26 L428.51,477.67 L428.03,477.11 L427.51,476.57 L426.97,476.07 L426.41,475.59 L425.81,475.14 L425.19,474.72 L424.55,474.33 L423.88,473.98 L423.19,473.66 L422.47,473.37 L421.74,473.12 L420.98,472.91 L420.2,472.74 L419.4,472.61 L418.58,472.53 L417.75,472.5 L416.9,472.52 L416.04,472.59 L415.17,472.71 L414.3,472.89 L413.42,473.13 L412.55,473.43 L411.69,473.8 L410.83,474.23 L409.99,474.73 L409.18,475.29 L408.39,475.92 L407.64,476.61 L406.94,477.37 L406.28,478.2 L405.67,479.08 L405.13,480.02 L404.65,481.01 L404.25,482.05 L403.93,483.13 L403.7,484.24 L403.55,485.38 L403.5,486.54 L403.54,487.71 L403.69,488.88Z" fill="#b7c31c"/><path d="M439.99,489.18 L439.65,490.39 L439.23,491.58 L438.75,492.74 L438.19,493.87 L431.24,490.18 L431.42,489.4 L431.55,488.63 L431.64,487.87 L431.69,487.11Z" fill="#f4c300"/><path d="M438.19,493.87 L437.58,494.93 L436.92,495.96 L436.19,496.94 L435.4,497.88 L434.57,498.77 L429.68,493.88 L430.08,493.15 L430.44,492.42 L430.76,491.67 L431.02,490.93 L431.24,490.18Z" fill="#e30613"/><path d="M418.65,486.21 L437.84,470.49 L437.62,470.21 L417.73,485.03Z" fill="#555"/><path d="M430.18,500.02 L430.93,500.17 L431.21,501.25 L431.7,501.58 L432.81,501.43 L433.24,502.06 L432.67,503.03 L432.79,503.61 L433.68,504.28 L433.53,505.03 L432.45,505.31 L432.12,505.8 L432.27,506.91 L431.64,507.34 L430.67,506.77 L430.09,506.89 L429.42,507.78 L428.67,507.63 L428.39,506.55 L427.9,506.22 L426.79,506.37 L426.36,505.74 L426.93,504.77 L426.81,504.19 L425.92,503.52 L426.07,502.77 L427.15,502.49 L427.48,502 L427.33,500.89 L427.96,500.46 L428.93,501.03 L429.51,500.91Z M431.05,503.9 A1.25,1.25 0 1 0 428.55,503.9 A1.25,1.25 0 1 0 431.05,503.9Z" fill="#d6d6d6" fill-rule="evenodd"/><path d="M437.4,501 L441.4,501 L441.4,501.9 L440.6,502.3 L440.6,504.1 L442.1,505.6 L436.7,505.6 L438.2,504.1 L438.2,502.3 L437.4,501.9Z" fill="#d6d6d6"/><rect x="438.9" y="505.6" width="1" height="2.6" fill="#d6d6d6"/><rect x="450" y="509" width="133" height="1" fill="#d9d9d9"/><path d="M544.43,498.77 L543.63,497.92 L542.88,497.02 L542.18,496.09 L541.53,495.12 L544.26,493.41 L544.76,494.26 L545.33,495.07 L545.95,495.84 L546.63,496.57Z" fill="#e30613"/><path d="M541.53,495.12 L540.93,494.08 L540.38,493.01 L539.9,491.92 L543.09,490.63 L543.41,491.58 L543.8,492.51 L544.26,493.41Z" fill="#f4c300"/><path d="M539.9,491.92 L539.41,490.57 L539.02,489.2 L538.72,487.8 L538.52,486.38 L538.41,484.95 L538.41,483.52 L538.51,482.09 L538.7,480.67 L539,479.27 L539.39,477.9 L539.87,476.55 L540.45,475.24 L541.12,473.97 L541.87,472.76 L542.71,471.59 L543.62,470.49 L544.61,469.46 L545.67,468.5 L546.79,467.61 L547.97,466.8 L549.21,466.08 L550.49,465.44 L551.81,464.89 L553.17,464.44 L554.56,464.08 L555.96,463.82 L557.39,463.66 L558.82,463.6 L560.25,463.64 L561.67,463.77 L563.08,464.01 L564.48,464.34 L565.84,464.77 L567.18,465.29 L568.47,465.9 L569.72,466.61 L570.91,467.39 L572.05,468.26 L573.13,469.21 L574.13,470.22 L575.07,471.31 L575.92,472.45 L576.7,473.66 L577.39,474.91 L577.99,476.21 L578.5,477.55 L578.91,478.92 L579.23,480.31 L579.45,481.73 L579.57,483.15 L579.6,484.59 L579.52,486.01 L579.34,487.44 L579.07,488.84 L578.7,490.22 L570.65,487.76 L570.7,486.9 L570.69,486.06 L570.63,485.23 L570.53,484.42 L570.38,483.62 L570.19,482.85 L569.96,482.09 L569.69,481.36 L569.39,480.66 L569.05,479.97 L568.67,479.31 L568.27,478.68 L567.83,478.07 L567.36,477.49 L566.87,476.93 L566.34,476.41 L565.79,475.91 L565.21,475.44 L564.61,474.99 L563.98,474.58 L563.32,474.21 L562.64,473.86 L561.94,473.55 L561.21,473.27 L560.46,473.04 L559.69,472.84 L558.9,472.69 L558.09,472.58 L557.26,472.52 L556.42,472.5 L555.56,472.54 L554.69,472.63 L553.82,472.78 L552.94,472.98 L552.06,473.25 L551.19,473.58 L550.32,473.98 L549.47,474.44 L548.64,474.96 L547.83,475.56 L547.06,476.22 L546.32,476.95 L545.63,477.74 L544.99,478.6 L544.41,479.51 L543.9,480.48 L543.45,481.5 L543.09,482.56 L542.81,483.67 L542.62,484.8 L542.51,485.95 L542.51,487.12 L542.6,488.3 L542.8,489.47 L543.09,490.63Z" fill="#b7c31c"/><path d="M578.7,490.22 L578.32,491.36 L577.87,492.47 L577.35,493.55 L570.3,489.96 L570.45,489.22 L570.57,488.49 L570.65,487.76Z" fill="#f4c300"/><path d="M577.35,493.55 L576.73,494.69 L576.04,495.78 L575.28,496.83 L574.45,497.82 L573.57,498.77 L568.68,493.88 L569.11,493.11 L569.48,492.33 L569.81,491.54 L570.08,490.75 L570.3,489.96Z" fill="#e30613"/><path d="M560.42,486.16 L552.21,462.75 L551.88,462.86 L559,486.62Z" fill="#555"/><path d="M569.18,500.02 L569.93,500.17 L570.21,501.25 L570.7,501.58 L571.81,501.43 L572.24,502.06 L571.67,503.03 L571.79,503.61 L572.68,504.28 L572.53,505.03 L571.45,505.31 L571.12,505.8 L571.27,506.91 L570.64,507.34 L569.67,506.77 L569.09,506.89 L568.42,507.78 L567.67,507.63 L567.39,506.55 L566.9,506.22 L565.79,506.37 L565.36,505.74 L565.93,504.77 L565.81,504.19 L564.92,503.52 L565.07,502.77 L566.15,502.49 L566.48,502 L566.33,500.89 L566.96,500.46 L567.93,501.03 L568.51,500.91Z M570.05,503.9 A1.25,1.25 0 1 0 567.55,503.9 A1.25,1.25 0 1 0 570.05,503.9Z" fill="#d6d6d6" fill-rule="evenodd"/><path d="M576.4,501 L580.4,501 L580.4,501.9 L579.6,502.3 L579.6,504.1 L581.1,505.6 L575.7,505.6 L577.2,504.1 L577.2,502.3 L576.4,501.9Z" fill="#d6d6d6"/><rect x="577.9" y="505.6" width="1" height="2.6" fill="#d6d6d6"/><rect x="588" y="509" width="134" height="1" fill="#d9d9d9"/><path d="M682.43,498.77 L681.69,497.98 L680.99,497.16 L680.33,496.31 L682.89,494.45 L683.42,495.19 L684,495.9 L684.63,496.57Z" fill="#b7c31c"/><path d="M680.33,496.31 L679.54,495.13 L678.83,493.9 L678.2,492.62 L677.66,491.31 L677.22,489.96 L676.87,488.58 L676.62,487.18 L676.46,485.77 L676.4,484.35 L676.44,482.93 L676.58,481.51 L676.81,480.11 L677.14,478.73 L677.57,477.37 L678.08,476.05 L678.69,474.76 L679.38,473.52 L680.16,472.33 L681.02,471.2 L681.96,470.13 L682.96,469.12 L684.04,468.19 L685.17,467.33 L686.36,466.56 L687.6,465.87 L688.89,465.26 L690.22,464.75 L691.57,464.33 L692.96,464 L694.36,463.77 L695.78,463.64 L697.2,463.6 L698.62,463.66 L700.03,463.82 L701.43,464.08 L702.8,464.43 L704.15,464.88 L705.47,465.42 L706.74,466.05 L707.97,466.76 L709.15,467.56 L710.27,468.44 L711.32,469.39 L712.31,470.42 L713.22,471.5 L714.06,472.65 L714.82,473.86 L715.49,475.11 L716.07,476.41 L716.56,477.74 L716.96,479.11 L717.26,480.49 L717.47,481.9 L717.58,483.32 L717.59,484.74 L717.51,486.16 L717.32,487.57 L717.04,488.96 L716.67,490.33 L716.2,491.67 L715.64,492.98 L714.99,494.24 L714.25,495.46 L713.43,496.62 L712.54,497.73 L711.57,498.77 L706.68,493.88 L707.15,493.03 L707.55,492.18 L707.89,491.31 L708.17,490.44 L708.38,489.56 L708.54,488.69 L708.65,487.83 L708.69,486.98 L708.69,486.14 L708.64,485.31 L708.54,484.5 L708.4,483.71 L708.22,482.94 L707.99,482.19 L707.73,481.46 L707.43,480.76 L707.1,480.07 L706.73,479.42 L706.33,478.78 L705.9,478.17 L705.45,477.59 L704.96,477.03 L704.44,476.5 L703.9,476 L703.33,475.53 L702.74,475.08 L702.12,474.67 L701.47,474.29 L700.8,473.94 L700.11,473.62 L699.39,473.34 L698.65,473.09 L697.89,472.89 L697.11,472.73 L696.31,472.6 L695.49,472.53 L694.66,472.5 L693.81,472.52 L692.95,472.6 L692.09,472.73 L691.21,472.91 L690.34,473.16 L689.47,473.47 L688.61,473.84 L687.76,474.27 L686.92,474.77 L686.11,475.34 L685.33,475.97 L684.59,476.67 L683.88,477.44 L683.23,478.26 L682.63,479.15 L682.09,480.09 L681.62,481.08 L681.23,482.12 L680.92,483.2 L680.69,484.32 L680.55,485.46 L680.5,486.61 L680.55,487.78 L680.7,488.95 L680.94,490.1 L681.29,491.24 L681.73,492.35 L682.26,493.43 L682.89,494.45Z" fill="#e30613"/><path d="M698.1,482.04 L680.97,499.99 L681.21,500.23 L699.16,483.1Z" fill="#555"/><path d="M708.18,500.02 L708.93,500.17 L709.21,501.25 L709.7,501.58 L710.81,501.43 L711.24,502.06 L710.67,503.03 L710.79,503.61 L711.68,504.28 L711.53,505.03 L710.45,505.31 L710.12,505.8 L710.27,506.91 L709.64,507.34 L708.67,506.77 L708.09,506.89 L707.42,507.78 L706.67,507.63 L706.39,506.55 L705.9,506.22 L704.79,506.37 L704.36,505.74 L704.93,504.77 L704.81,504.19 L703.92,503.52 L704.07,502.77 L705.15,502.49 L705.48,502 L705.33,500.89 L705.96,500.46 L706.93,501.03 L707.51,500.91Z M709.05,503.9 A1.25,1.25 0 1 0 706.55,503.9 A1.25,1.25 0 1 0 709.05,503.9Z" fill="#d6d6d6" fill-rule="evenodd"/><path d="M715.4,501 L719.4,501 L719.4,501.9 L718.6,502.3 L718.6,504.1 L720.1,505.6 L714.7,505.6 L716.2,504.1 L716.2,502.3 L715.4,501.9Z" fill="#d6d6d6"/><rect x="716.9" y="505.6" width="1" height="2.6" fill="#d6d6d6"/><rect x="34" y="312" width="271" height="1" fill="#d9d9d9"/><path d="M216,148.5 A72.6,72.6 0 0 1 288.6,221.1 L265.2,221.1 A49.2,49.2 0 0 0 216,171.9Z" fill="#b7c31c"/><path d="M288.6,221.1 A72.6,72.6 0 0 1 216,293.7 L216,270.3 A49.2,49.2 0 0 0 265.2,221.1Z" fill="#f4c300"/><path d="M216,293.7 A72.6,72.6 0 0 1 143.4,221.1 L166.8,221.1 A49.2,49.2 0 0 0 216,270.3Z" fill="#f4c300"/><path d="M143.4,221.1 A72.6,72.6 0 0 1 216,148.5 L216,171.9 A49.2,49.2 0 0 0 166.8,221.1Z" fill="#e30613"/><line x1="216" y1="192.06" x2="216" y2="146.5" stroke="#fff" stroke-width="2"/><line x1="245.04" y1="221.1" x2="290.6" y2="221.1" stroke="#fff" stroke-width="2"/><line x1="216" y1="250.14" x2="216" y2="295.7" stroke="#fff" stroke-width="2"/><line x1="186.96" y1="221.1" x2="141.4" y2="221.1" stroke="#fff" stroke-width="2"/><path d="M212.89,227.46 L274.09,163.22 L273.88,163.01 L209.64,224.21Z" fill="#707070"/><circle cx="211.26" cy="225.84" r="2.3" fill="#707070"/><path d="M291.18,303.02 L291.93,303.17 L292.21,304.25 L292.7,304.58 L293.81,304.43 L294.24,305.06 L293.67,306.03 L293.79,306.61 L294.68,307.28 L294.53,308.03 L293.45,308.31 L293.12,308.8 L293.27,309.91 L292.64,310.34 L291.67,309.77 L291.09,309.89 L290.42,310.78 L289.67,310.63 L289.39,309.55 L288.9,309.22 L287.79,309.37 L287.36,308.74 L287.93,307.77 L287.81,307.19 L286.92,306.52 L287.07,305.77 L288.15,305.49 L288.48,305 L288.33,303.89 L288.96,303.46 L289.93,304.03 L290.51,303.91Z M292.05,306.9 A1.25,1.25 0 1 0 289.55,306.9 A1.25,1.25 0 1 0 292.05,306.9Z" fill="#d6d6d6" fill-rule="evenodd"/><path d="M298.4,304 L302.4,304 L302.4,304.9 L301.6,305.3 L301.6,307.1 L303.1,308.6 L297.7,308.6 L299.2,307.1 L299.2,305.3 L298.4,304.9Z" fill="#d6d6d6"/><rect x="299.9" y="308.6" width="1" height="2.6" fill="#d6d6d6"/><path d="M104.2,580.8 L111.2,580.8 L107.7,584.2Z" fill="#222"/><path d="M201.3,578.7 L205.1,574.7 L208.9,578.7Z" fill="#ccc"/><path d="M201.3,580.3 L205.1,584.3 L208.9,580.3Z" fill="#ccc"/><path d="M316.2,592.5 L320,588.5 L323.8,592.5Z" fill="#ccc"/><path d="M316.2,594.1 L320,598.1 L323.8,594.1Z" fill="#ccc"/><path d="M470.8,578.7 L474.6,574.7 L478.4,578.7Z" fill="#ccc"/><path d="M470.8,580.3 L474.6,584.3 L478.4,580.3Z" fill="#ccc"/><path d="M599.3,578.7 L603.1,574.7 L606.9,578.7Z" fill="#ccc"/><path d="M599.3,580.3 L603.1,584.3 L606.9,580.3Z" fill="#ccc"/><path d="M728.8,578.7 L732.6,574.7 L736.4,578.7Z" fill="#ccc"/><path d="M728.8,580.3 L732.6,584.3 L736.4,580.3Z" fill="#ccc"/><rect x="48" y="603" width="829" height="1" fill="#e3e3e3"/><rect x="48" y="630" width="829" height="1" fill="#e3e3e3"/><rect x="48" y="657" width="829" height="1" fill="#e3e3e3"/><rect x="48" y="684" width="829" height="1" fill="#e3e3e3"/><rect x="48" y="711" width="829" height="1" fill="#e3e3e3"/><rect x="48" y="738" width="829" height="1" fill="#e3e3e3"/><rect x="48" y="765" width="829" height="1" fill="#e3e3e3"/><rect x="48" y="792" width="829" height="1" fill="#e3e3e3"/><rect x="48" y="819" width="829" height="1" fill="#e3e3e3"/><rect x="48" y="846" width="829" height="1" fill="#e3e3e3"/><path d="M813.26,613.82 L813.97,613.96 L814.41,614.68 L814.93,615.03 L815.76,615.15 L816.16,615.76 L815.96,616.57 L816.08,617.19 L816.58,617.86 L816.44,618.57 L815.72,619.01 L815.37,619.53 L815.25,620.36 L814.64,620.76 L813.83,620.56 L813.21,620.68 L812.54,621.18 L811.83,621.04 L811.39,620.32 L810.87,619.97 L810.04,619.85 L809.64,619.24 L809.84,618.43 L809.72,617.81 L809.22,617.14 L809.36,616.43 L810.08,615.99 L810.43,615.47 L810.55,614.64 L811.16,614.24 L811.97,614.44 L812.59,614.32Z M814.4,617.5 A1.5,1.5 0 1 0 811.4,617.5 A1.5,1.5 0 1 0 814.4,617.5Z" fill="#3a3a3a" fill-rule="evenodd"/><path d="M807.59,620.62 L808.14,620.77 L808.33,621.45 L808.65,621.77 L809.33,621.96 L809.48,622.51 L808.99,623.02 L808.87,623.45 L809.05,624.14 L808.64,624.55 L807.95,624.37 L807.52,624.49 L807.01,624.98 L806.46,624.83 L806.27,624.15 L805.95,623.83 L805.27,623.64 L805.12,623.09 L805.61,622.58 L805.73,622.15 L805.55,621.46 L805.96,621.05 L806.65,621.23 L807.08,621.11Z M808.2,622.8 A0.9,0.9 0 1 0 806.4,622.8 A0.9,0.9 0 1 0 808.2,622.8Z" fill="#3a3a3a" fill-rule="evenodd"/><path d="M813.26,640.82 L813.97,640.96 L814.41,641.68 L814.93,642.03 L815.76,642.15 L816.16,642.76 L815.96,643.57 L816.08,644.19 L816.58,644.86 L816.44,645.57 L815.72,646.01 L815.37,646.53 L815.25,647.36 L814.64,647.76 L813.83,647.56 L813.21,647.68 L812.54,648.18 L811.83,648.04 L811.39,647.32 L810.87,646.97 L810.04,646.85 L809.64,646.24 L809.84,645.43 L809.72,644.81 L809.22,644.14 L809.36,643.43 L810.08,642.99 L810.43,642.47 L810.55,641.64 L811.16,641.24 L811.97,641.44 L812.59,641.32Z M814.4,644.5 A1.5,1.5 0 1 0 811.4,644.5 A1.5,1.5 0 1 0 814.4,644.5Z" fill="#3a3a3a" fill-rule="evenodd"/><path d="M807.59,647.62 L808.14,647.77 L808.33,648.45 L808.65,648.77 L809.33,648.96 L809.48,649.51 L808.99,650.02 L808.87,650.45 L809.05,651.14 L808.64,651.55 L807.95,651.37 L807.52,651.49 L807.01,651.98 L806.46,651.83 L806.27,651.15 L805.95,650.83 L805.27,650.64 L805.12,650.09 L805.61,649.58 L805.73,649.15 L805.55,648.46 L805.96,648.05 L806.65,648.23 L807.08,648.11Z M808.2,649.8 A0.9,0.9 0 1 0 806.4,649.8 A0.9,0.9 0 1 0 808.2,649.8Z" fill="#3a3a3a" fill-rule="evenodd"/><path d="M813.26,667.82 L813.97,667.96 L814.41,668.68 L814.93,669.03 L815.76,669.15 L816.16,669.76 L815.96,670.57 L816.08,671.19 L816.58,671.86 L816.44,672.57 L815.72,673.01 L815.37,673.53 L815.25,674.36 L814.64,674.76 L813.83,674.56 L813.21,674.68 L812.54,675.18 L811.83,675.04 L811.39,674.32 L810.87,673.97 L810.04,673.85 L809.64,673.24 L809.84,672.43 L809.72,671.81 L809.22,671.14 L809.36,670.43 L810.08,669.99 L810.43,669.47 L810.55,668.64 L811.16,668.24 L811.97,668.44 L812.59,668.32Z M814.4,671.5 A1.5,1.5 0 1 0 811.4,671.5 A1.5,1.5 0 1 0 814.4,671.5Z" fill="#3a3a3a" fill-rule="evenodd"/><path d="M807.59,674.62 L808.14,674.77 L808.33,675.45 L808.65,675.77 L809.33,675.96 L809.48,676.51 L808.99,677.02 L808.87,677.45 L809.05,678.14 L808.64,678.55 L807.95,678.37 L807.52,678.49 L807.01,678.98 L806.46,678.83 L806.27,678.15 L805.95,677.83 L805.27,677.64 L805.12,677.09 L805.61,676.58 L805.73,676.15 L805.55,675.46 L805.96,675.05 L806.65,675.23 L807.08,675.11Z M808.2,676.8 A0.9,0.9 0 1 0 806.4,676.8 A0.9,0.9 0 1 0 808.2,676.8Z" fill="#3a3a3a" fill-rule="evenodd"/><path d="M813.26,694.82 L813.97,694.96 L814.41,695.68 L814.93,696.03 L815.76,696.15 L816.16,696.76 L815.96,697.57 L816.08,698.19 L816.58,698.86 L816.44,699.57 L815.72,700.01 L815.37,700.53 L815.25,701.36 L814.64,701.76 L813.83,701.56 L813.21,701.68 L812.54,702.18 L811.83,702.04 L811.39,701.32 L810.87,700.97 L810.04,700.85 L809.64,700.24 L809.84,699.43 L809.72,698.81 L809.22,698.14 L809.36,697.43 L810.08,696.99 L810.43,696.47 L810.55,695.64 L811.16,695.24 L811.97,695.44 L812.59,695.32Z M814.4,698.5 A1.5,1.5 0 1 0 811.4,698.5 A1.5,1.5 0 1 0 814.4,698.5Z" fill="#3a3a3a" fill-rule="evenodd"/><path d="M807.59,701.62 L808.14,701.77 L808.33,702.45 L808.65,702.77 L809.33,702.96 L809.48,703.51 L808.99,704.02 L808.87,704.45 L809.05,705.14 L808.64,705.55 L807.95,705.37 L807.52,705.49 L807.01,705.98 L806.46,705.83 L806.27,705.15 L805.95,704.83 L805.27,704.64 L805.12,704.09 L805.61,703.58 L805.73,703.15 L805.55,702.46 L805.96,702.05 L806.65,702.23 L807.08,702.11Z M808.2,703.8 A0.9,0.9 0 1 0 806.4,703.8 A0.9,0.9 0 1 0 808.2,703.8Z" fill="#3a3a3a" fill-rule="evenodd"/><path d="M813.26,721.82 L813.97,721.96 L814.41,722.68 L814.93,723.03 L815.76,723.15 L816.16,723.76 L815.96,724.57 L816.08,725.19 L816.58,725.86 L816.44,726.57 L815.72,727.01 L815.37,727.53 L815.25,728.36 L814.64,728.76 L813.83,728.56 L813.21,728.68 L812.54,729.18 L811.83,729.04 L811.39,728.32 L810.87,727.97 L810.04,727.85 L809.64,727.24 L809.84,726.43 L809.72,725.81 L809.22,725.14 L809.36,724.43 L810.08,723.99 L810.43,723.47 L810.55,722.64 L811.16,722.24 L811.97,722.44 L812.59,722.32Z M814.4,725.5 A1.5,1.5 0 1 0 811.4,725.5 A1.5,1.5 0 1 0 814.4,725.5Z" fill="#3a3a3a" fill-rule="evenodd"/><path d="M807.59,728.62 L808.14,728.77 L808.33,729.45 L808.65,729.77 L809.33,729.96 L809.48,730.51 L808.99,731.02 L808.87,731.45 L809.05,732.14 L808.64,732.55 L807.95,732.37 L807.52,732.49 L807.01,732.98 L806.46,732.83 L806.27,732.15 L805.95,731.83 L805.27,731.64 L805.12,731.09 L805.61,730.58 L805.73,730.15 L805.55,729.46 L805.96,729.05 L806.65,729.23 L807.08,729.11Z M808.2,730.8 A0.9,0.9 0 1 0 806.4,730.8 A0.9,0.9 0 1 0 808.2,730.8Z" fill="#3a3a3a" fill-rule="evenodd"/><path d="M813.26,748.82 L813.97,748.96 L814.41,749.68 L814.93,750.03 L815.76,750.15 L816.16,750.76 L815.96,751.57 L816.08,752.19 L816.58,752.86 L816.44,753.57 L815.72,754.01 L815.37,754.53 L815.25,755.36 L814.64,755.76 L813.83,755.56 L813.21,755.68 L812.54,756.18 L811.83,756.04 L811.39,755.32 L810.87,754.97 L810.04,754.85 L809.64,754.24 L809.84,753.43 L809.72,752.81 L809.22,752.14 L809.36,751.43 L810.08,750.99 L810.43,750.47 L810.55,749.64 L811.16,749.24 L811.97,749.44 L812.59,749.32Z M814.4,752.5 A1.5,1.5 0 1 0 811.4,752.5 A1.5,1.5 0 1 0 814.4,752.5Z" fill="#3a3a3a" fill-rule="evenodd"/><path d="M807.59,755.62 L808.14,755.77 L808.33,756.45 L808.65,756.77 L809.33,756.96 L809.48,757.51 L808.99,758.02 L808.87,758.45 L809.05,759.14 L808.64,759.55 L807.95,759.37 L807.52,759.49 L807.01,759.98 L806.46,759.83 L806.27,759.15 L805.95,758.83 L805.27,758.64 L805.12,758.09 L805.61,757.58 L805.73,757.15 L805.55,756.46 L805.96,756.05 L806.65,756.23 L807.08,756.11Z M808.2,757.8 A0.9,0.9 0 1 0 806.4,757.8 A0.9,0.9 0 1 0 808.2,757.8Z" fill="#3a3a3a" fill-rule="evenodd"/><path d="M813.26,775.82 L813.97,775.96 L814.41,776.68 L814.93,777.03 L815.76,777.15 L816.16,777.76 L815.96,778.57 L816.08,779.19 L816.58,779.86 L816.44,780.57 L815.72,781.01 L815.37,781.53 L815.25,782.36 L814.64,782.76 L813.83,782.56 L813.21,782.68 L812.54,783.18 L811.83,783.04 L811.39,782.32 L810.87,781.97 L810.04,781.85 L809.64,781.24 L809.84,780.43 L809.72,779.81 L809.22,779.14 L809.36,778.43 L810.08,777.99 L810.43,777.47 L810.55,776.64 L811.16,776.24 L811.97,776.44 L812.59,776.32Z M814.4,779.5 A1.5,1.5 0 1 0 811.4,779.5 A1.5,1.5 0 1 0 814.4,779.5Z" fill="#3a3a3a" fill-rule="evenodd"/><path d="M807.59,782.62 L808.14,782.77 L808.33,783.45 L808.65,783.77 L809.33,783.96 L809.48,784.51 L808.99,785.02 L808.87,785.45 L809.05,786.14 L808.64,786.55 L807.95,786.37 L807.52,786.49 L807.01,786.98 L806.46,786.83 L806.27,786.15 L805.95,785.83 L805.27,785.64 L805.12,785.09 L805.61,784.58 L805.73,784.15 L805.55,783.46 L805.96,783.05 L806.65,783.23 L807.08,783.11Z M808.2,784.8 A0.9,0.9 0 1 0 806.4,784.8 A0.9,0.9 0 1 0 808.2,784.8Z" fill="#3a3a3a" fill-rule="evenodd"/><path d="M813.26,802.82 L813.97,802.96 L814.41,803.68 L814.93,804.03 L815.76,804.15 L816.16,804.76 L815.96,805.57 L816.08,806.19 L816.58,806.86 L816.44,807.57 L815.72,808.01 L815.37,808.53 L815.25,809.36 L814.64,809.76 L813.83,809.56 L813.21,809.68 L812.54,810.18 L811.83,810.04 L811.39,809.32 L810.87,808.97 L810.04,808.85 L809.64,808.24 L809.84,807.43 L809.72,806.81 L809.22,806.14 L809.36,805.43 L810.08,804.99 L810.43,804.47 L810.55,803.64 L811.16,803.24 L811.97,803.44 L812.59,803.32Z M814.4,806.5 A1.5,1.5 0 1 0 811.4,806.5 A1.5,1.5 0 1 0 814.4,806.5Z" fill="#3a3a3a" fill-rule="evenodd"/><path d="M807.59,809.62 L808.14,809.77 L808.33,810.45 L808.65,810.77 L809.33,810.96 L809.48,811.51 L808.99,812.02 L808.87,812.45 L809.05,813.14 L808.64,813.55 L807.95,813.37 L807.52,813.49 L807.01,813.98 L806.46,813.83 L806.27,813.15 L805.95,812.83 L805.27,812.64 L805.12,812.09 L805.61,811.58 L805.73,811.15 L805.55,810.46 L805.96,810.05 L806.65,810.23 L807.08,810.11Z M808.2,811.8 A0.9,0.9 0 1 0 806.4,811.8 A0.9,0.9 0 1 0 808.2,811.8Z" fill="#3a3a3a" fill-rule="evenodd"/><path d="M813.26,829.82 L813.97,829.96 L814.41,830.68 L814.93,831.03 L815.76,831.15 L816.16,831.76 L815.96,832.57 L816.08,833.19 L816.58,833.86 L816.44,834.57 L815.72,835.01 L815.37,835.53 L815.25,836.36 L814.64,836.76 L813.83,836.56 L813.21,836.68 L812.54,837.18 L811.83,837.04 L811.39,836.32 L810.87,835.97 L810.04,835.85 L809.64,835.24 L809.84,834.43 L809.72,833.81 L809.22,833.14 L809.36,832.43 L810.08,831.99 L810.43,831.47 L810.55,830.64 L811.16,830.24 L811.97,830.44 L812.59,830.32Z M814.4,833.5 A1.5,1.5 0 1 0 811.4,833.5 A1.5,1.5 0 1 0 814.4,833.5Z" fill="#3a3a3a" fill-rule="evenodd"/><path d="M807.59,836.62 L808.14,836.77 L808.33,837.45 L808.65,837.77 L809.33,837.96 L809.48,838.51 L808.99,839.02 L808.87,839.45 L809.05,840.14 L808.64,840.55 L807.95,840.37 L807.52,840.49 L807.01,840.98 L806.46,840.83 L806.27,840.15 L805.95,839.83 L805.27,839.64 L805.12,839.09 L805.61,838.58 L805.73,838.15 L805.55,837.46 L805.96,837.05 L806.65,837.23 L807.08,837.11Z M808.2,838.8 A0.9,0.9 0 1 0 806.4,838.8 A0.9,0.9 0 1 0 808.2,838.8Z" fill="#3a3a3a" fill-rule="evenodd"/></svg>
<div class="t tt" style="left:315px;top:128.94px;font-size:10px;line-height:10px;color:#383838;-webkit-text-stroke:0.15px #383838;transform:scaleX(0.9069);transform-origin:0 0;">Average Read Latency</div><div class="t tv" style="left:315px;top:167.53px;font-size:10px;line-height:10px;color:#383838;-webkit-text-stroke:0.15px #383838;transform:scaleX(0.9211);transform-origin:0 0;">13 msec</div><div class="t tt" style="left:454px;top:128.94px;font-size:10px;line-height:10px;color:#383838;-webkit-text-stroke:0.15px #383838;transform:scaleX(0.9178);transform-origin:0 0;">Average Write Latency</div><div class="t tv" style="left:454px;top:167.53px;font-size:10px;line-height:10px;color:#383838;-webkit-text-stroke:0.15px #383838;transform:scaleX(0.9300);transform-origin:0 0;">1 msec</div><div class="t tt" style="left:593px;top:128.94px;font-size:10px;line-height:10px;color:#383838;-webkit-text-stroke:0.15px #383838;transform:scaleX(0.8833);transform-origin:0 0;">Data Read</div><div class="t tv" style="left:593px;top:167.53px;font-size:10px;line-height:10px;color:#383838;-webkit-text-stroke:0.15px #383838;transform:scaleX(0.9422);transform-origin:0 0;">0 MByte/s</div><div class="t tt" style="left:731px;top:128.94px;font-size:10px;line-height:10px;color:#383838;-webkit-text-stroke:0.15px #383838;transform:scaleX(0.9364);transform-origin:0 0;">Data Written</div><div class="t tv" style="left:731px;top:167.53px;font-size:10px;line-height:10px;color:#383838;-webkit-text-stroke:0.15px #383838;transform:scaleX(0.9422);transform-origin:0 0;">0 MByte/s</div><div class="t tt" style="left:315px;top:194.94px;font-size:10px;line-height:10px;color:#383838;-webkit-text-stroke:0.15px #383838;transform:scaleX(0.9054);transform-origin:0 0;">Fan Power Cooling Mo…</div><div class="t tv" style="left:315px;top:233.53px;font-size:10px;line-height:10px;color:#383838;-webkit-text-stroke:0.15px #383838;transform:scaleX(0.9300);transform-origin:0 0;">5,440</div><div class="t tt" style="left:454px;top:194.94px;font-size:10px;line-height:10px;color:#383838;-webkit-text-stroke:0.15px #383838;transform:scaleX(0.9054);transform-origin:0 0;">Fan Power Cooling Mo…</div><div class="t tv" style="left:454px;top:233.53px;font-size:10px;line-height:10px;color:#383838;-webkit-text-stroke:0.15px #383838;transform:scaleX(0.9300);transform-origin:0 0;">5,440</div><div class="t tt" style="left:593px;top:194.94px;font-size:10px;line-height:10px;color:#383838;-webkit-text-stroke:0.15px #383838;transform:scaleX(0.9054);transform-origin:0 0;">Fan Power Cooling Mo…</div><div class="t tv" style="left:593px;top:233.53px;font-size:10px;line-height:10px;color:#383838;-webkit-text-stroke:0.15px #383838;transform:scaleX(0.9300);transform-origin:0 0;">5,440</div><div class="t tt" style="left:731px;top:194.94px;font-size:10px;line-height:10px;color:#383838;-webkit-text-stroke:0.15px #383838;transform:scaleX(0.9054);transform-origin:0 0;">Fan Power Cooling Mo…</div><div class="t tv" style="left:731px;top:233.53px;font-size:10px;line-height:10px;color:#383838;-webkit-text-stroke:0.15px #383838;transform:scaleX(0.9300);transform-origin:0 0;">5,440</div><div class="t tt" style="left:315px;top:259.94px;font-size:10px;line-height:10px;color:#383838;-webkit-text-stroke:0.15px #383838;transform:scaleX(0.9054);transform-origin:0 0;">Fan Power Cooling Mo…</div><div class="t tv" style="left:315px;top:299.54px;font-size:10px;line-height:10px;color:#383838;-webkit-text-stroke:0.15px #383838;transform:scaleX(0.9300);transform-origin:0 0;">5,440</div><div class="t tt" style="left:454px;top:259.94px;font-size:10px;line-height:10px;color:#383838;-webkit-text-stroke:0.15px #383838;transform:scaleX(0.9054);transform-origin:0 0;">Fan Power Cooling Mo…</div><div class="t tv" style="left:454px;top:299.54px;font-size:10px;line-height:10px;color:#383838;-webkit-text-stroke:0.15px #383838;transform:scaleX(0.9300);transform-origin:0 0;">5,370</div><div class="t tt" style="left:593px;top:259.94px;font-size:10px;line-height:10px;color:#383838;-webkit-text-stroke:0.15px #383838;transform:scaleX(0.9054);transform-origin:0 0;">Fan Power Cooling Mo…</div><div class="t tv" style="left:593px;top:299.54px;font-size:10px;line-height:10px;color:#383838;-webkit-text-stroke:0.15px #383838;transform:scaleX(0.9300);transform-origin:0 0;">5,440</div><div class="t tt" style="left:731px;top:259.94px;font-size:10px;line-height:10px;color:#383838;-webkit-text-stroke:0.15px #383838;transform:scaleX(0.9054);transform-origin:0 0;">Fan Power Cooling Mo…</div><div class="t tv" style="left:731px;top:299.54px;font-size:10px;line-height:10px;color:#383838;-webkit-text-stroke:0.15px #383838;transform:scaleX(0.9300);transform-origin:0 0;">5,440</div><div class="t tt" style="left:315px;top:325.94px;font-size:10px;line-height:10px;color:#383838;-webkit-text-stroke:0.15px #383838;transform:scaleX(0.9300);transform-origin:0 0;">Member Health Status</div><div class="t tv" style="left:315px;top:364.54px;font-size:10px;line-height:10px;color:#383838;-webkit-text-stroke:0.15px #383838;transform:scaleX(0.9300);transform-origin:0 0;">Normal</div><div class="t tt" style="left:454px;top:325.94px;font-size:10px;line-height:10px;color:#383838;-webkit-text-stroke:0.15px #383838;transform:scaleX(0.9259);transform-origin:0 0;">Number of Spares</div><div class="t tv" style="left:454px;top:364.54px;font-size:10px;line-height:10px;color:#383838;-webkit-text-stroke:0.15px #383838;transform:scaleX(0.9300);transform-origin:0 0;">1 #</div><div class="t tt" style="left:593px;top:325.94px;font-size:10px;line-height:10px;color:#383838;-webkit-text-stroke:0.15px #383838;transform:scaleX(0.9054);transform-origin:0 0;">Power Supply Power C…</div><div class="t tv" style="left:593px;top:364.54px;font-size:10px;line-height:10px;color:#383838;-webkit-text-stroke:0.15px #383838;transform:scaleX(0.9114);transform-origin:0 0;">On and Operating</div><div class="t tt" style="left:731px;top:325.94px;font-size:10px;line-height:10px;color:#383838;-webkit-text-stroke:0.15px #383838;transform:scaleX(0.9054);transform-origin:0 0;">Power Supply Power C…</div><div class="t tv" style="left:731px;top:364.54px;font-size:10px;line-height:10px;color:#383838;-webkit-text-stroke:0.15px #383838;transform:scaleX(0.9114);transform-origin:0 0;">On and Operating</div><div class="t tt" style="left:39px;top:391.94px;font-size:10px;line-height:10px;color:#383838;-webkit-text-stroke:0.15px #383838;transform:scaleX(0.9927);transform-origin:0 0;">RAID Status</div><div class="t tv" style="left:39px;top:430.54px;font-size:10px;line-height:10px;color:#383838;-webkit-text-stroke:0.15px #383838;transform:scaleX(0.9300);transform-origin:0 0;">Ok</div><div class="t tt" style="left:178px;top:391.94px;font-size:10px;line-height:10px;color:#383838;-webkit-text-stroke:0.15px #383838;transform:scaleX(0.8750);transform-origin:0 0;">Storage Free %</div><div class="t tv" style="left:178px;top:430.54px;font-size:10px;line-height:10px;color:#383838;-webkit-text-stroke:0.15px #383838;transform:scaleX(0.9300);transform-origin:0 0;">15 %</div><div class="t tt" style="left:316px;top:391.94px;font-size:10px;line-height:10px;color:#383838;-webkit-text-stroke:0.15px #383838;transform:scaleX(0.9128);transform-origin:0 0;">Temperature Backplan…</div><div class="t tv" style="left:316px;top:430.54px;font-size:10px;line-height:10px;color:#383838;-webkit-text-stroke:0.15px #383838;transform:scaleX(0.9300);transform-origin:0 0;">27 °C</div><div class="t tt" style="left:455px;top:391.94px;font-size:10px;line-height:10px;color:#383838;-webkit-text-stroke:0.15px #383838;transform:scaleX(0.9128);transform-origin:0 0;">Temperature Backplan…</div><div class="t tv" style="left:455px;top:430.54px;font-size:10px;line-height:10px;color:#383838;-webkit-text-stroke:0.15px #383838;transform:scaleX(0.9300);transform-origin:0 0;">25 °C</div><div class="t tt" style="left:593px;top:391.94px;font-size:10px;line-height:10px;color:#383838;-webkit-text-stroke:0.15px #383838;transform:scaleX(0.9351);transform-origin:0 0;">Temperature Control m…</div><div class="t tv" style="left:593px;top:430.54px;font-size:10px;line-height:10px;color:#383838;-webkit-text-stroke:0.15px #383838;transform:scaleX(0.9300);transform-origin:0 0;">34 °C</div><div class="t tt" style="left:732px;top:391.94px;font-size:10px;line-height:10px;color:#383838;-webkit-text-stroke:0.15px #383838;transform:scaleX(0.9351);transform-origin:0 0;">Temperature Control m…</div><div class="t tv" style="left:732px;top:430.54px;font-size:10px;line-height:10px;color:#383838;-webkit-text-stroke:0.15px #383838;transform:scaleX(0.9300);transform-origin:0 0;">71 °C</div><div class="t tt" style="left:39px;top:456.94px;font-size:10px;line-height:10px;color:#383838;-webkit-text-stroke:0.15px #383838;transform:scaleX(0.9351);transform-origin:0 0;">Temperature Control m…</div><div class="t tv" style="left:39px;top:496.54px;font-size:10px;line-height:10px;color:#383838;-webkit-text-stroke:0.15px #383838;transform:scaleX(0.9300);transform-origin:0 0;">54 °C</div><div class="t tt" style="left:178px;top:456.94px;font-size:10px;line-height:10px;color:#383838;-webkit-text-stroke:0.15px #383838;transform:scaleX(0.9351);transform-origin:0 0;">Temperature Control m…</div><div class="t tv" style="left:178px;top:496.54px;font-size:10px;line-height:10px;color:#383838;-webkit-text-stroke:0.15px #383838;transform:scaleX(0.9300);transform-origin:0 0;">35 °C</div><div class="t tt" style="left:316px;top:456.94px;font-size:10px;line-height:10px;color:#383838;-webkit-text-stroke:0.15px #383838;transform:scaleX(0.9351);transform-origin:0 0;">Temperature Control m…</div><div class="t tv" style="left:316px;top:496.54px;font-size:10px;line-height:10px;color:#383838;-webkit-text-stroke:0.15px #383838;transform:scaleX(0.9300);transform-origin:0 0;">68 °C</div><div class="t tt" style="left:455px;top:456.94px;font-size:10px;line-height:10px;color:#383838;-webkit-text-stroke:0.15px #383838;transform:scaleX(0.9351);transform-origin:0 0;">Temperature Control m…</div><div class="t tv" style="left:455px;top:496.54px;font-size:10px;line-height:10px;color:#383838;-webkit-text-stroke:0.15px #383838;transform:scaleX(0.9300);transform-origin:0 0;">52 °C</div><div class="t tt" style="left:593px;top:456.94px;font-size:10px;line-height:10px;color:#383838;-webkit-text-stroke:0.15px #383838;transform:scaleX(0.9348);transform-origin:0 0;">Temperature System</div><div class="t tv" style="left:593px;top:496.54px;font-size:10px;line-height:10px;color:#383838;-webkit-text-stroke:0.15px #383838;transform:scaleX(0.9300);transform-origin:0 0;">0 °C</div><div class="t big" style="left:37.9px;top:128.24px;font-size:12px;line-height:12px;color:#3a3a3a;-webkit-text-stroke:0.15px #3a3a3a;transform:scaleX(0.9975);transform-origin:0 0;">Member Status</div><div class="t big" style="left:39px;top:296.24px;font-size:12px;line-height:12px;color:#3a3a3a;-webkit-text-stroke:0.15px #3a3a3a;transform:scaleX(0.9429);transform-origin:0 0;">Online</div>
<div class="t th" style="left:57.4px;top:573.84px;font-size:12px;line-height:12px;color:#333;transform:scaleX(0.9432);transform-origin:0 0;">Channel</div><div class="t th" style="left:185.29px;top:573.84px;font-size:12px;line-height:12px;color:#333;transform:scaleX(0.9091);transform-origin:0 0;">ID</div><div class="t th" style="left:267.11px;top:573.64px;font-size:12px;line-height:12px;color:#333;transform:scaleX(0.9927);transform-origin:0 0;">Last Value</div><div class="t th" style="left:265.5px;top:587.54px;font-size:12px;line-height:12px;color:#333;transform:scaleX(0.9891);transform-origin:0 0;">(volume)</div><div class="t th" style="left:368.11px;top:573.64px;font-size:12px;line-height:12px;color:#333;transform:scaleX(0.9867);transform-origin:0 0;">Last Value (speed)</div><div class="t th" style="left:544.57px;top:573.84px;font-size:12px;line-height:12px;color:#333;transform:scaleX(1.0340);transform-origin:0 0;">Minimum</div><div class="t th" style="left:670.68px;top:573.84px;font-size:12px;line-height:12px;color:#333;transform:scaleX(1.0157);transform-origin:0 0;">Maximum</div><div class="t td" style="left:57.5px;top:614.74px;font-size:12px;line-height:12px;color:#4a4a4a;transform:scaleX(0.9105);transform-origin:0 0;">Average Read Late…</div><div class="t td" style="left:186.2px;top:614.74px;font-size:12px;line-height:12px;color:#4a4a4a;transform:scaleX(0.9500);transform-origin:0 0;">6</div><div class="t td" style="left:145.6px;width:300px;text-align:center;top:614.74px;font-size:12px;line-height:12px;color:#4a4a4a;transform:scaleX(1.0091);transform-origin:50% 0;">13 msec</div><div class="t td" style="left:308.8px;width:300px;text-align:right;top:614.74px;font-size:12px;line-height:12px;color:#4a4a4a;transform:scaleX(1.0091);transform-origin:100% 0;">13 msec</div><div class="t td" style="left:437.6px;width:300px;text-align:right;top:614.74px;font-size:12px;line-height:12px;color:#4a4a4a;transform:scaleX(1.0091);transform-origin:100% 0;">13 msec</div><div class="t td" style="left:57.5px;top:641.74px;font-size:12px;line-height:12px;color:#4a4a4a;transform:scaleX(0.9257);transform-origin:0 0;">Average Write Late…</div><div class="t td" style="left:186.2px;top:641.74px;font-size:12px;line-height:12px;color:#4a4a4a;transform:scaleX(0.9500);transform-origin:0 0;">7</div><div class="t td" style="left:145.6px;width:300px;text-align:center;top:641.74px;font-size:12px;line-height:12px;color:#4a4a4a;transform:scaleX(0.9816);transform-origin:50% 0;">1 msec</div><div class="t td" style="left:308.8px;width:300px;text-align:right;top:641.74px;font-size:12px;line-height:12px;color:#4a4a4a;transform:scaleX(0.9816);transform-origin:100% 0;">1 msec</div><div class="t td" style="left:437.6px;width:300px;text-align:right;top:641.74px;font-size:12px;line-height:12px;color:#4a4a4a;transform:scaleX(0.9816);transform-origin:100% 0;">1 msec</div><div class="t td" style="left:56.55px;top:668.74px;font-size:12px;line-height:12px;color:#4a4a4a;transform:scaleX(0.9464);transform-origin:0 0;">Data Read</div><div class="t td" style="left:186.2px;top:668.74px;font-size:12px;line-height:12px;color:#4a4a4a;transform:scaleX(0.9500);transform-origin:0 0;">8</div><div class="t td" style="left:145.6px;width:300px;text-align:center;top:668.74px;font-size:12px;line-height:12px;color:#4a4a4a;transform:scaleX(0.9477);transform-origin:50% 0;">0 MByte</div><div class="t td" style="left:274px;width:300px;text-align:center;top:668.74px;font-size:12px;line-height:12px;color:#4a4a4a;">0 MByte/s</div><div class="t td" style="left:308.8px;width:300px;text-align:right;top:668.74px;font-size:12px;line-height:12px;color:#4a4a4a;">0 MByte/s</div><div class="t td" style="left:437.6px;width:300px;text-align:right;top:668.74px;font-size:12px;line-height:12px;color:#4a4a4a;">0 MByte/s</div><div class="t td" style="left:56.52px;top:695.74px;font-size:12px;line-height:12px;color:#4a4a4a;transform:scaleX(0.9815);transform-origin:0 0;">Data Written</div><div class="t td" style="left:186.2px;top:695.74px;font-size:12px;line-height:12px;color:#4a4a4a;transform:scaleX(0.9500);transform-origin:0 0;">9</div><div class="t td" style="left:145.6px;width:300px;text-align:center;top:695.74px;font-size:12px;line-height:12px;color:#4a4a4a;transform:scaleX(0.9477);transform-origin:50% 0;">0 MByte</div><div class="t td" style="left:274px;width:300px;text-align:center;top:695.74px;font-size:12px;line-height:12px;color:#4a4a4a;">0 MByte/s</div><div class="t td" style="left:308.8px;width:300px;text-align:right;top:695.74px;font-size:12px;line-height:12px;color:#4a4a4a;">0 MByte/s</div><div class="t td" style="left:437.6px;width:300px;text-align:right;top:695.74px;font-size:12px;line-height:12px;color:#4a4a4a;">0 MByte/s</div><div class="t td" style="left:56.49px;top:722.74px;font-size:12px;line-height:12px;color:#4a4a4a;transform:scaleX(1.0096);transform-origin:0 0;">Downtime</div><div class="t td" style="left:186.2px;top:722.74px;font-size:12px;line-height:12px;color:#4a4a4a;transform:scaleX(0.9500);transform-origin:0 0;">-4</div><div class="t td" style="left:56.56px;top:749.74px;font-size:12px;line-height:12px;color:#4a4a4a;transform:scaleX(0.9391);transform-origin:0 0;">Fan Power Cooling …</div><div class="t td" style="left:185.25px;top:749.74px;font-size:12px;line-height:12px;color:#4a4a4a;transform:scaleX(0.9500);transform-origin:0 0;">19</div><div class="t td" style="left:145.6px;width:300px;text-align:center;top:749.74px;font-size:12px;line-height:12px;color:#4a4a4a;transform:scaleX(0.9500);transform-origin:50% 0;">5,440</div><div class="t td" style="left:308.8px;width:300px;text-align:right;top:749.74px;font-size:12px;line-height:12px;color:#4a4a4a;transform:scaleX(0.9500);transform-origin:100% 0;">5,440</div><div class="t td" style="left:437.6px;width:300px;text-align:right;top:749.74px;font-size:12px;line-height:12px;color:#4a4a4a;transform:scaleX(0.9500);transform-origin:100% 0;">5,440</div><div class="t td" style="left:56.56px;top:776.74px;font-size:12px;line-height:12px;color:#4a4a4a;transform:scaleX(0.9391);transform-origin:0 0;">Fan Power Cooling …</div><div class="t td" style="left:186.2px;top:776.74px;font-size:12px;line-height:12px;color:#4a4a4a;transform:scaleX(0.9500);transform-origin:0 0;">20</div><div class="t td" style="left:145.6px;width:300px;text-align:center;top:776.74px;font-size:12px;line-height:12px;color:#4a4a4a;transform:scaleX(0.9500);transform-origin:50% 0;">5,440</div><div class="t td" style="left:308.8px;width:300px;text-align:right;top:776.74px;font-size:12px;line-height:12px;color:#4a4a4a;transform:scaleX(0.9500);transform-origin:100% 0;">5,440</div><div class="t td" style="left:437.6px;width:300px;text-align:right;top:776.74px;font-size:12px;line-height:12px;color:#4a4a4a;transform:scaleX(0.9500);transform-origin:100% 0;">5,440</div><div class="t td" style="left:56.56px;top:803.74px;font-size:12px;line-height:12px;color:#4a4a4a;transform:scaleX(0.9391);transform-origin:0 0;">Fan Power Cooling …</div><div class="t td" style="left:186.2px;top:803.74px;font-size:12px;line-height:12px;color:#4a4a4a;transform:scaleX(0.9500);transform-origin:0 0;">21</div><div class="t td" style="left:145.6px;width:300px;text-align:center;top:803.74px;font-size:12px;line-height:12px;color:#4a4a4a;transform:scaleX(0.9500);transform-origin:50% 0;">5,440</div><div class="t td" style="left:308.8px;width:300px;text-align:right;top:803.74px;font-size:12px;line-height:12px;color:#4a4a4a;transform:scaleX(0.9500);transform-origin:100% 0;">5,440</div><div class="t td" style="left:437.6px;width:300px;text-align:right;top:803.74px;font-size:12px;line-height:12px;color:#4a4a4a;transform:scaleX(0.9500);transform-origin:100% 0;">5,440</div><div class="t td" style="left:56.56px;top:830.74px;font-size:12px;line-height:12px;color:#4a4a4a;transform:scaleX(0.9391);transform-origin:0 0;">Fan Power Cooling …</div><div class="t td" style="left:186.2px;top:830.74px;font-size:12px;line-height:12px;color:#4a4a4a;transform:scaleX(0.9500);transform-origin:0 0;">22</div><div class="t td" style="left:145.6px;width:300px;text-align:center;top:830.74px;font-size:12px;line-height:12px;color:#4a4a4a;transform:scaleX(0.9500);transform-origin:50% 0;">5,440</div><div class="t td" style="left:308.8px;width:300px;text-align:right;top:830.74px;font-size:12px;line-height:12px;color:#4a4a4a;transform:scaleX(0.9500);transform-origin:100% 0;">5,440</div><div class="t td" style="left:437.6px;width:300px;text-align:right;top:830.74px;font-size:12px;line-height:12px;color:#4a4a4a;transform:scaleX(0.9500);transform-origin:100% 0;">5,440</div>
</body></html>
